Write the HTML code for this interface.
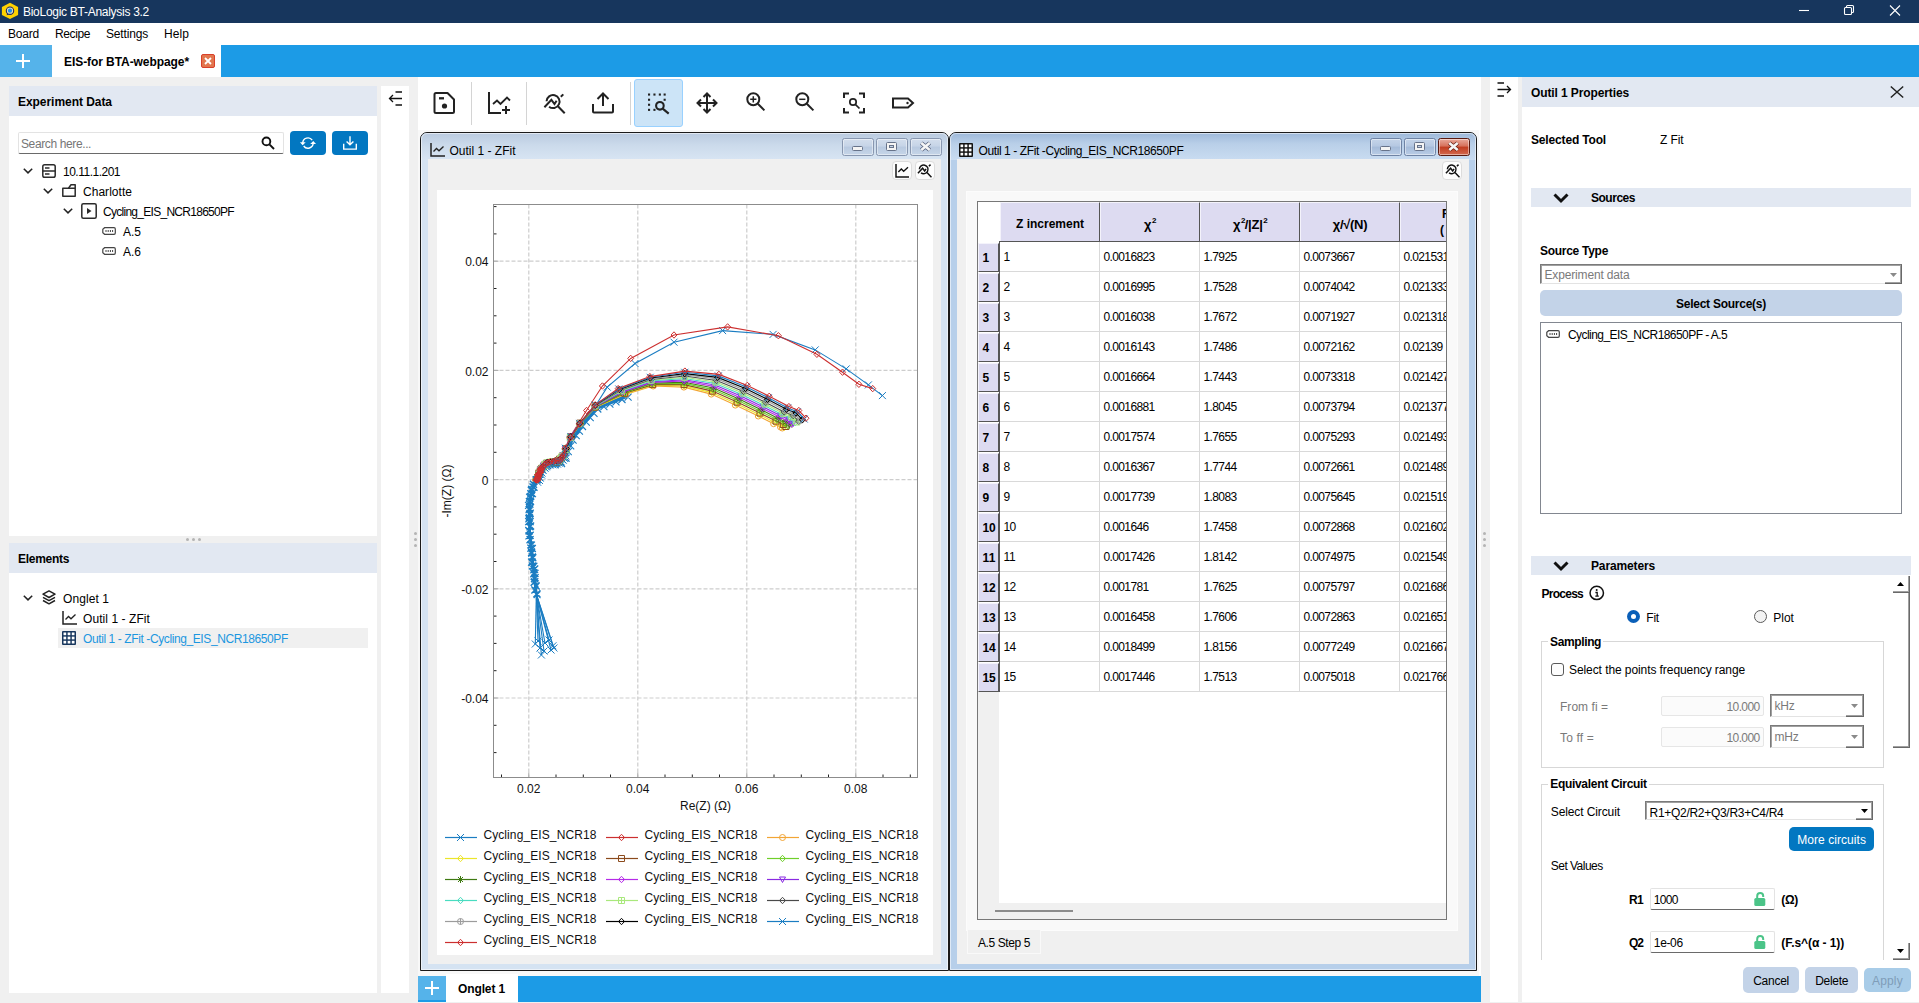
<!DOCTYPE html>
<html lang="en"><head><meta charset="utf-8"><title>BioLogic BT-Analysis 3.2</title>
<style>
*{box-sizing:border-box;margin:0;padding:0}
html,body{width:1919px;height:1003px;overflow:hidden;background:#f0f0f0}
body{position:relative;font-family:"Liberation Sans",sans-serif;font-size:12px;color:#000}
.abs{position:absolute}
.b{font-weight:bold}
svg{display:block;overflow:visible}
.t{position:absolute;white-space:nowrap;line-height:16px;height:16px}
/* top */
#titlebar{left:0;top:0;width:1919px;height:23px;background:#17365d}
#menubar{left:0;top:23px;width:1919px;height:22px;background:#fff}
#tabbar{left:0;top:45px;width:1919px;height:32px;background:#1c9be6}
#plus{left:0;top:0;width:52px;height:32px;background:#55b3ea}
#tab{left:52px;top:0;width:169px;height:32px;background:#fff}
/* panels */
.hdr{background:#e2e8f2}
.white{background:#fff}

</style></head>
<body>
<div id="titlebar" class="abs">
<svg class="abs" style="left:0;top:0" width="20" height="22" viewBox="0 0 20 22"><polygon points="10,2.8 18.1,6.9 18.1,14.9 10,19 1.9,14.9 1.9,6.9" fill="#ffd200"/><path d="M6.6 15.2L7.6 12.4L9.4 14.2Z" fill="#1d2a6a"/><circle cx="10" cy="10.7" r="3.7" fill="#e6dcb4" stroke="#1d2a6a" stroke-width="1.1"/><circle cx="10" cy="10.7" r="2.1" fill="#1f8fea"/></svg>
<div class="t" style="left:23px;top:4px;color:#fff;letter-spacing:-0.28px;">BioLogic BT-Analysis 3.2</div>
<svg class="abs" style="left:1798px;top:5px" width="110" height="12" viewBox="0 0 110 12" fill="none" stroke="#fff" stroke-width="1.1"><path d="M1 5.5H11"/><rect x="46.5" y="2.5" width="7" height="7" rx="1"/><path d="M48.5 2.5V1.5a1 1 0 0 1 1-1h5a1 1 0 0 1 1 1v5a1 1 0 0 1-1 1h-1"/><path d="M92 0.5l10 10M102 0.5l-10 10"/></svg>
</div>
<div id="menubar" class="abs"><div class="t" style="left:8px;top:3px;letter-spacing:-0.20px;">Board</div><div class="t" style="left:55px;top:3px;letter-spacing:-0.39px;">Recipe</div><div class="t" style="left:106px;top:3px;letter-spacing:-0.17px;">Settings</div><div class="t" style="left:164px;top:3px;letter-spacing:0.08px;">Help</div></div>
<div id="tabbar" class="abs">
<div id="plus" class="abs"><svg class="abs" style="left:16px;top:9px" width="14" height="14" viewBox="0 0 14 14" stroke="#fff" stroke-width="2"><path d="M7 0V14M0 7H14"/></svg></div>
<div id="tab" class="abs"><div class="t b" style="left:12px;top:9px;letter-spacing:-0.07px;">EIS-for BTA-webpage*</div>
<div class="abs" style="left:149px;top:9px;width:14px;height:14px;background:#e2764e;border:1px solid #d9402a;border-radius:2px"><svg class="abs" style="left:2px;top:2px" width="8" height="8" viewBox="0 0 8 8" stroke="#fff" stroke-width="1.8"><path d="M1 1L7 7M7 1L1 7"/></svg></div></div>
</div>
<div class="abs hdr" style="left:9px;top:86px;width:368px;height:30px"><div class="t b" style="left:9px;top:8px;letter-spacing:-0.05px;">Experiment Data</div></div>
<div class="abs white" style="left:9px;top:116px;width:368px;height:420px"></div>
<div class="abs" style="left:18px;top:132px;width:266px;height:22px;background:#fff;border:1px solid #e3e3e3;border-bottom:1px solid #6a6a6a;border-radius:2px"><div class="t" style="left:2px;top:2.5px;color:#767676;letter-spacing:-0.38px;">Search here...</div><svg class="abs" style="left:242px;top:3px" width="14" height="14" viewBox="0 0 14 14" fill="none" stroke="#111" stroke-width="1.9"><circle cx="5.4" cy="5.4" r="3.9"/><path d="M8.4 8.4L13 13" stroke-linecap="butt"/></svg></div>
<div class="abs" style="left:290px;top:131px;width:36px;height:24px;background:#0277c1;border-radius:4px"><svg class="abs" style="left:0;top:0" width="36" height="24" viewBox="0 0 36 24" fill="none" stroke="#fff" stroke-width="1.4"><path d="M12.77 12A5.2 5.2 0 0 1 22.2 9.1"/><path d="M23.17 12.1A5.2 5.2 0 0 1 13.7 15"/><path d="M9.9 11.2H15.7L12.7 14.3Z" fill="#fff" stroke="none"/><path d="M20.2 12.9H26L23.3 9.9Z" fill="#fff" stroke="none"/></svg></div>
<div class="abs" style="left:332px;top:131px;width:36px;height:24px;background:#0277c1;border-radius:4px"><svg class="abs" style="left:11px;top:5px" width="14" height="14" viewBox="0 0 14 14" fill="none" stroke="#fff" stroke-width="1.4"><path d="M7 0.3V8.5M3.6 5.4L7 8.8L10.4 5.4"/><path d="M0.7 7.8V13.1H13.3V7.8"/></svg></div>
<svg class="abs" style="left:22.7px;top:168px" width="10" height="6" viewBox="0 0 10 6" fill="none" stroke="#222" stroke-width="1.5"><path d="M0.8 0.8L5 4.9L9.2 0.8"/></svg><svg class="abs" style="left:42px;top:164px" width="14" height="14" viewBox="0 0 14 14" fill="none" stroke="#2b2b2b" stroke-width="1.5"><rect x="0.8" y="0.8" width="12.4" height="12.4" rx="1.8"/><path d="M0.8 7H13.2M3 4H7.5M3 10H7.5" /></svg><div class="t" style="left:63px;top:163.7px;letter-spacing:-0.50px;">10.11.1.201</div>
<svg class="abs" style="left:42.7px;top:188px" width="10" height="6" viewBox="0 0 10 6" fill="none" stroke="#222" stroke-width="1.5"><path d="M0.8 0.8L5 4.9L9.2 0.8"/></svg><svg class="abs" style="left:62px;top:184px" width="14" height="13" viewBox="0 0 14 13" fill="none" stroke="#2b2b2b" stroke-width="1.5" stroke-linejoin="round"><path d="M0.8 4.3H13.2V12.2H0.8Z"/><path d="M6.5 4.3L9 0.8H13.2V4.3"/></svg><div class="t" style="left:83px;top:183.7px;letter-spacing:0.03px;">Charlotte</div>
<svg class="abs" style="left:62.7px;top:208px" width="10" height="6" viewBox="0 0 10 6" fill="none" stroke="#222" stroke-width="1.5"><path d="M0.8 0.8L5 4.9L9.2 0.8"/></svg><svg class="abs" style="left:81px;top:203px" width="16" height="16" viewBox="0 0 16 16" fill="none" stroke="#2b2b2b" stroke-width="1.5"><rect x="0.8" y="0.8" width="14.4" height="14.4" rx="1.5"/><path d="M6 5L10.5 8L6 11Z" fill="#2b2b2b" stroke="none"/></svg><div class="t" style="left:103px;top:203.7px;letter-spacing:-0.72px;">Cycling_EIS_NCR18650PF</div>
<svg class="abs" style="left:102px;top:227px" width="14" height="8" viewBox="0 0 14 8" fill="none" stroke="#444" stroke-width="1.2"><path d="M2.6 0.7H12A1.3 1.3 0 0 1 13.3 2V6A1.3 1.3 0 0 1 12 7.3H2.6L0.8 5.8V2.2Z"/><path d="M4 3V5M6.2 3V5M8.4 3V5M10.6 3V5" stroke-width="1"/></svg><div class="t" style="left:123px;top:223.7px;letter-spacing:0.00px;">A.5</div>
<svg class="abs" style="left:102px;top:247px" width="14" height="8" viewBox="0 0 14 8" fill="none" stroke="#444" stroke-width="1.2"><path d="M2.6 0.7H12A1.3 1.3 0 0 1 13.3 2V6A1.3 1.3 0 0 1 12 7.3H2.6L0.8 5.8V2.2Z"/><path d="M4 3V5M6.2 3V5M8.4 3V5M10.6 3V5" stroke-width="1"/></svg><div class="t" style="left:123px;top:243.7px;letter-spacing:0.00px;">A.6</div>
<div class="abs" style="left:186px;top:538px;width:15px;height:3px"><i class="abs" style="left:0;top:0;width:3px;height:3px;background:#b4b4b4;border-radius:1.5px"></i><i class="abs" style="left:6px;top:0;width:3px;height:3px;background:#b4b4b4;border-radius:1.5px"></i><i class="abs" style="left:12px;top:0;width:3px;height:3px;background:#b4b4b4;border-radius:1.5px"></i></div>
<div class="abs hdr" style="left:9px;top:543px;width:368px;height:30px"><div class="t b" style="left:9px;top:8px;letter-spacing:-0.29px;">Elements</div></div>
<div class="abs white" style="left:9px;top:573px;width:368px;height:420px"></div>
<div class="abs" style="left:58px;top:628px;width:310px;height:20px;background:#f0f0f0"></div>
<svg class="abs" style="left:22.7px;top:595px" width="10" height="6" viewBox="0 0 10 6" fill="none" stroke="#222" stroke-width="1.5"><path d="M0.8 0.8L5 4.9L9.2 0.8"/></svg><svg class="abs" style="left:42px;top:590px" width="14" height="15" viewBox="0 0 14 15" fill="none" stroke="#222" stroke-width="1.5" stroke-linejoin="round"><path d="M7 0.9L13 4.2L7 7.5L1 4.2Z"/><path d="M1 7.3L7 10.6L13 7.3"/><path d="M1 10.5L7 13.8L13 10.5"/></svg><div class="t" style="left:63px;top:590.7px;letter-spacing:0.08px;">Onglet 1</div>
<svg class="abs" style="left:62px;top:611px" width="15" height="14" viewBox="0 0 15 14" fill="none" stroke="#222" stroke-width="1.5"><path d="M1 0V13H15"/><path d="M3.5 8.5L6.5 5.5L9 7.8L13.5 3.5" stroke-width="1.3"/></svg><div class="t" style="left:83px;top:610.7px;letter-spacing:0.07px;">Outil 1 - ZFit</div>
<svg class="abs" style="left:62px;top:631px" width="14" height="14" viewBox="0 0 14 14"><rect x="0" y="0" width="14" height="14" rx="1" fill="#17365d"/><g fill="#fff"><rect x="1.5" y="1.5" width="2.7" height="2.7"/><rect x="5.65" y="1.5" width="2.7" height="2.7"/><rect x="9.8" y="1.5" width="2.7" height="2.7"/><rect x="1.5" y="5.65" width="2.7" height="2.7"/><rect x="5.65" y="5.65" width="2.7" height="2.7"/><rect x="9.8" y="5.65" width="2.7" height="2.7"/><rect x="1.5" y="9.8" width="2.7" height="2.7"/><rect x="5.65" y="9.8" width="2.7" height="2.7"/><rect x="9.8" y="9.8" width="2.7" height="2.7"/></g></svg><div class="t" style="left:83px;top:630.7px;color:#1c97e0;letter-spacing:-0.40px;">Outil 1 - ZFit -Cycling_EIS_NCR18650PF</div>
<div class="abs white" style="left:381px;top:86px;width:28px;height:907px"><svg class="abs" style="left:7px;top:5px" width="15" height="15" viewBox="0 0 15 15" fill="none" stroke="#111" stroke-width="1.3"><path d="M7.5 1H14M7.5 14H14M1.5 7.5H14M5 4L1.5 7.5L5 11"/></svg></div>
<div class="abs" style="left:414px;top:532px;width:2px;height:14px"><i class="abs" style="left:0;top:0;width:3px;height:3px;background:#b4b4b4;border-radius:1.5px"></i><i class="abs" style="left:0;top:6px;width:3px;height:3px;background:#b4b4b4;border-radius:1.5px"></i><i class="abs" style="left:0;top:12px;width:3px;height:3px;background:#b4b4b4;border-radius:1.5px"></i></div>
<div class="abs white" style="left:418px;top:77px;width:1063px;height:899px"></div>
<div class="abs" style="left:418px;top:130px;width:1061px;height:846px;background:#f8f8f8"></div>
<div class="abs" style="left:471px;top:82px;width:1px;height:43px;background:#d4d4d4"></div>
<div class="abs" style="left:526px;top:82px;width:1px;height:43px;background:#d4d4d4"></div>
<div class="abs" style="left:630px;top:82px;width:1px;height:43px;background:#d4d4d4"></div>
<div class="abs" style="left:634px;top:79px;width:49px;height:48px;background:#cce4f7;border:1px solid #99d1ff;border-radius:3px"></div>
<svg class="abs" style="left:432.7px;top:91px" width="24" height="24" viewBox="0 0 24 24" fill="none" stroke="#222" stroke-width="2"><path d="M3 2H14.5L21 8.5V20.5A1.5 1.5 0 0 1 19.5 22H3A1.5 1.5 0 0 1 1.5 20.5V3.5A1.5 1.5 0 0 1 3 2Z" stroke-linejoin="round"/><path d="M6 7.3H11" stroke-width="2.3"/><circle cx="11.5" cy="15" r="2.6" fill="#222" stroke="none"/></svg>
<svg class="abs" style="left:487px;top:91px" width="24" height="24" viewBox="0 0 24 24" fill="none" stroke="#222" stroke-width="2"><path d="M2 1V22H14"/><path d="M6 13L10 9.5L13.5 13L20 6.5L23 9.5" stroke-width="1.8"/><path d="M19 15V23M15 19H23"/></svg>
<svg class="abs" style="left:543px;top:92px" width="24" height="24" viewBox="0 0 24 24" fill="none" stroke="#222" stroke-width="2"><path d="M3.55 9.3A6.5 6.5 0 1 1 6.05 14.7"/><path d="M14.9 14.3L21.7 21.3"/><path d="M1.4 15.2L8.4 7.8L11.5 12L13.6 8.7"/><path d="M17.8 4.8L20.3 2.4"/></svg>
<svg class="abs" style="left:591px;top:91px" width="24" height="24" viewBox="0 0 24 24" fill="none" stroke="#222" stroke-width="2"><path d="M12 15V2.5M6.5 8L12 2.5L17.5 8"/><path d="M2 13V20.5A1 1 0 0 0 3 21.5H21A1 1 0 0 0 22 20.5V13"/></svg>
<svg class="abs" style="left:647px;top:92px" width="24" height="24" viewBox="0 0 24 24" fill="none" stroke="#222" stroke-width="2"><rect x="1.0" y="1.5" width="2.1" height="2.1" fill="#222" stroke="none"/><rect x="6.4" y="1.5" width="2.1" height="2.1" fill="#222" stroke="none"/><rect x="11.8" y="1.5" width="2.1" height="2.1" fill="#222" stroke="none"/><rect x="16.6" y="1.5" width="2.1" height="2.1" fill="#222" stroke="none"/><rect x="1.0" y="6.7" width="2.1" height="2.1" fill="#222" stroke="none"/><rect x="1.0" y="11.7" width="2.1" height="2.1" fill="#222" stroke="none"/><rect x="1.0" y="16.8" width="2.1" height="2.1" fill="#222" stroke="none"/><rect x="16.6" y="6.7" width="2.1" height="2.1" fill="#222" stroke="none"/><rect x="6.4" y="16.8" width="2.1" height="2.1" fill="#222" stroke="none"/><circle cx="12.9" cy="13.8" r="3.8" stroke-width="2.1"/><path d="M15.7 16.6L21.7 21.6" stroke-width="2.1"/></svg>
<svg class="abs" style="left:695px;top:91px" width="24" height="24" viewBox="0 0 24 24" fill="none" stroke="#222" stroke-width="2"><path d="M12 2.5V21.5M2.5 12H21.5"/><path d="M8.5 6L12 2.5L15.5 6M8.5 18L12 21.5L15.5 18M6 8.5L2.5 12L6 15.5M18 8.5L21.5 12L18 15.5"/></svg>
<svg class="abs" style="left:743.6px;top:90.2px" width="24" height="24" viewBox="0 0 24 24" fill="none" stroke="#222" stroke-width="2"><circle cx="9.3" cy="9.3" r="6"/><path d="M13.8 13.8L20.4 20.4"/><path d="M9.3 6.2V12.4M6.2 9.3H12.4" stroke-width="1.5"/></svg>
<svg class="abs" style="left:792.6px;top:90.2px" width="24" height="24" viewBox="0 0 24 24" fill="none" stroke="#222" stroke-width="2"><circle cx="9.3" cy="9.3" r="6"/><path d="M13.8 13.8L20.4 20.4"/><path d="M6.2 9.3H12.4" stroke-width="1.5"/></svg>
<svg class="abs" style="left:842px;top:91px" width="24" height="24" viewBox="0 0 24 24" fill="none" stroke="#222" stroke-width="2"><path d="M2 7V2.5H7M17 2.5H22V7M22 17V21.5H17M7 21.5H2V17"/><circle cx="11" cy="11" r="3.2" stroke-width="1.7"/><path d="M13.3 13.3L17.5 17.5" stroke-width="1.7"/></svg>
<svg class="abs" style="left:891px;top:91px" width="24" height="24" viewBox="0 0 24 24" fill="none" stroke="#222" stroke-width="2"><path d="M2 7.5H17L22 12L17 16.5H2Z" stroke-linejoin="miter"/><circle cx="16.5" cy="12" r="1.2" fill="#222" stroke="none"/></svg>
<div class="abs" style="left:420px;top:132px;width:529px;height:839px;border:1px solid #1a1a1a;border-radius:7px 7px 0 0;background:#d5e3f2;overflow:hidden"><div class="abs" style="left:0;top:0;width:100%;height:27px;background:linear-gradient(#b9cadf,#cbdaeb 45%,#d8e5f3)"></div><div class="abs" style="left:0;top:0;width:100%;height:100%;border:1px solid rgba(255,255,255,.55);border-radius:6px 6px 0 0"></div><div class="abs" style="left:7px;top:26px;width:513px;height:805px;background:#f0f0f0"></div></div>
<div class="abs" style="left:949px;top:132px;width:528px;height:839px;border:1px solid #1a1a1a;border-radius:7px 7px 0 0;background:#b7cfea;overflow:hidden"><div class="abs" style="left:0;top:0;width:100%;height:27px;background:linear-gradient(#9db8d9,#b9cfe8 40%,#c9dcf1)"></div><div class="abs" style="left:0;top:0;width:100%;height:100%;border:1px solid rgba(255,255,255,.55);border-radius:6px 6px 0 0"></div><div class="abs" style="left:7px;top:26px;width:512px;height:805px;background:#f0f0f0"></div></div>
<svg class="abs" style="left:430px;top:143px" width="15" height="14" viewBox="0 0 15 14" fill="none" stroke="#222" stroke-width="1.5"><path d="M1 0V13H15"/><path d="M3.5 8.5L6.5 5.5L9 7.8L13.5 3.5" stroke-width="1.3"/></svg>
<div class="t" style="left:449.5px;top:142.5px;letter-spacing:0.00px;">Outil 1 - ZFit</div>
<div class="abs" style="left:842px;top:138px;width:32px;height:18px;border:1px solid #8897b0;border-radius:2.5px;background:linear-gradient(#d3deed,#c6d4e7 45%,#b8c9e0 50%,#c6d5e8);box-shadow:inset 0 0 0 1px rgba(255,255,255,.45)"><div class="abs" style="left:9px;top:7px;width:11px;height:5px;background:#f4f4f4;border:1px solid #67738a;border-radius:1.5px"></div></div><div class="abs" style="left:876px;top:138px;width:32px;height:18px;border:1px solid #8897b0;border-radius:2.5px;background:linear-gradient(#d3deed,#c6d4e7 45%,#b8c9e0 50%,#c6d5e8);box-shadow:inset 0 0 0 1px rgba(255,255,255,.45)"><div class="abs" style="left:9px;top:3px;width:11px;height:9px;background:#f4f4f4;border:1px solid #67738a;border-radius:1.5px"><div class="abs" style="left:2px;top:2px;width:5px;height:3px;border:1px solid #67738a;background:#c6d4e7"></div></div></div><div class="abs" style="left:910px;top:138px;width:32px;height:18px;border:1px solid #8897b0;border-radius:2.5px;background:linear-gradient(#d3deed,#c6d4e7 45%,#b8c9e0 50%,#c6d5e8);box-shadow:inset 0 0 0 1px rgba(255,255,255,.45)"><svg class="abs" style="left:8px;top:2px" width="13" height="11" viewBox="0 0 13 11"><path d="M2.3 2L10.7 9M10.7 2L2.3 9" stroke="#56627c" stroke-width="4.2"/><path d="M2.3 2L10.7 9M10.7 2L2.3 9" stroke="#f6f6f6" stroke-width="2.6"/></svg></div>
<svg class="abs" style="left:959px;top:143px" width="14" height="14" viewBox="0 0 14 14"><rect x="0" y="0" width="14" height="14" rx="1" fill="#111"/><g fill="#fff"><rect x="1.5" y="1.5" width="2.7" height="2.7"/><rect x="5.65" y="1.5" width="2.7" height="2.7"/><rect x="9.8" y="1.5" width="2.7" height="2.7"/><rect x="1.5" y="5.65" width="2.7" height="2.7"/><rect x="5.65" y="5.65" width="2.7" height="2.7"/><rect x="9.8" y="5.65" width="2.7" height="2.7"/><rect x="1.5" y="9.8" width="2.7" height="2.7"/><rect x="5.65" y="9.8" width="2.7" height="2.7"/><rect x="9.8" y="9.8" width="2.7" height="2.7"/></g></svg>
<div class="t" style="left:978.5px;top:142.5px;letter-spacing:-0.40px;">Outil 1 - ZFit -Cycling_EIS_NCR18650PF</div>
<div class="abs" style="left:1370px;top:138px;width:32px;height:18px;border:1px solid #6f83a4;border-radius:2.5px;background:linear-gradient(#c5d4e9,#b5c8e2 45%,#a5bbd9 50%,#b9cce5);box-shadow:inset 0 0 0 1px rgba(255,255,255,.45)"><div class="abs" style="left:9px;top:7px;width:11px;height:5px;background:#f4f4f4;border:1px solid #67738a;border-radius:1.5px"></div></div><div class="abs" style="left:1404px;top:138px;width:32px;height:18px;border:1px solid #6f83a4;border-radius:2.5px;background:linear-gradient(#c5d4e9,#b5c8e2 45%,#a5bbd9 50%,#b9cce5);box-shadow:inset 0 0 0 1px rgba(255,255,255,.45)"><div class="abs" style="left:9px;top:3px;width:11px;height:9px;background:#f4f4f4;border:1px solid #67738a;border-radius:1.5px"><div class="abs" style="left:2px;top:2px;width:5px;height:3px;border:1px solid #67738a;background:#c6d4e7"></div></div></div><div class="abs" style="left:1438px;top:138px;width:32px;height:18px;border:1px solid #5a1a10;border-radius:2.5px;background:linear-gradient(#e9a99b,#d6705a 45%,#c23c20 50%,#d2694f);box-shadow:inset 0 0 0 1px rgba(255,255,255,.45)"><svg class="abs" style="left:8px;top:2px" width="13" height="11" viewBox="0 0 13 11"><path d="M2.3 2L10.7 9M10.7 2L2.3 9" stroke="#6a2418" stroke-width="4.2"/><path d="M2.3 2L10.7 9M10.7 2L2.3 9" stroke="#f6f6f6" stroke-width="2.6"/></svg></div>
<div class="abs" style="left:891.5px;top:161px;width:20px;height:19px;background:#fdfdfd;border:1px solid #dcdcdc;border-radius:4px"><svg class="abs" style="left:1.5px;top:1px" width="16" height="16" viewBox="0 0 24 24" fill="none" stroke="#111" stroke-width="2.2"><path d="M3 1.5V21H22.5"/><path d="M6.5 13.5L11 9L14.5 12.5L21 6.5" stroke-width="2"/></svg></div>
<div class="abs" style="left:914.5px;top:161px;width:20px;height:19px;background:#fdfdfd;border:1px solid #dcdcdc;border-radius:4px"><svg class="abs" style="left:1.5px;top:1px" width="16" height="16" viewBox="0 0 24 24" fill="none" stroke="#111" stroke-width="2.2"><path d="M3.55 9.3A6.5 6.5 0 1 1 6.05 14.7"/><path d="M14.9 14.3L21.7 21.3"/><path d="M1.4 15.2L8.4 7.8L11.5 12L13.6 8.7"/><path d="M17.8 4.8L20.3 2.4"/></svg></div>
<div class="abs" style="left:1442px;top:161px;width:20px;height:19px;background:#fdfdfd;border:1px solid #dcdcdc;border-radius:4px"><svg class="abs" style="left:1.5px;top:1px" width="16" height="16" viewBox="0 0 24 24" fill="none" stroke="#111" stroke-width="2.2"><path d="M3.55 9.3A6.5 6.5 0 1 1 6.05 14.7"/><path d="M14.9 14.3L21.7 21.3"/><path d="M1.4 15.2L8.4 7.8L11.5 12L13.6 8.7"/><path d="M17.8 4.8L20.3 2.4"/></svg></div>
<div class="abs white" style="left:437px;top:190px;width:496px;height:765px"></div>
<svg class="abs" style="left:0;top:0" width="1919" height="1003" viewBox="0 0 1919 1003" font-family="Liberation Sans, sans-serif" font-size="12"><path d="M528.8 204.5V777.5M637.8 204.5V777.5M746.8 204.5V777.5M855.8 204.5V777.5M493.5 261.2H917.5M493.5 370.4H917.5M493.5 479.6H917.5M493.5 588.8H917.5M493.5 698.0H917.5" stroke="#cdcdcd" stroke-width="1.2" stroke-dasharray="4 2" fill="none"/><path d="M501.5 777.5v-3M556.0 777.5v-3M583.3 777.5v-3M610.5 777.5v-3M665.0 777.5v-3M692.3 777.5v-3M719.5 777.5v-3M774.0 777.5v-3M801.3 777.5v-3M828.5 777.5v-3M883.0 777.5v-3M910.3 777.5v-3M493.5 752.6h3M493.5 725.3h3M493.5 670.7h3M493.5 643.4h3M493.5 616.1h3M493.5 561.5h3M493.5 534.2h3M493.5 506.9h3M493.5 452.3h3M493.5 425.0h3M493.5 397.7h3M493.5 343.1h3M493.5 315.8h3M493.5 288.5h3M493.5 233.9h3M493.5 206.6h3" stroke="#222" stroke-width="1" fill="none"/><path d="M528.8 777.5v-5M637.8 777.5v-5M746.8 777.5v-5M855.8 777.5v-5M493.5 698.0h5M493.5 588.8h5M493.5 479.6h5M493.5 370.4h5M493.5 261.2h5" stroke="#aaa" stroke-width="1" fill="none"/><rect x="493.5" y="204.5" width="424.0" height="573.0" fill="none" stroke="#8c8c8c" stroke-width="1"/><text x="488.5" y="266.4" text-anchor="end" fill="#111">0.04</text><text x="488.5" y="375.6" text-anchor="end" fill="#111">0.02</text><text x="488.5" y="484.8" text-anchor="end" fill="#111">0</text><text x="488.5" y="594.0" text-anchor="end" fill="#111">-0.02</text><text x="488.5" y="703.2" text-anchor="end" fill="#111">-0.04</text><text x="528.8" y="793" text-anchor="middle" fill="#111">0.02</text><text x="637.8" y="793" text-anchor="middle" fill="#111">0.04</text><text x="746.8" y="793" text-anchor="middle" fill="#111">0.06</text><text x="855.8" y="793" text-anchor="middle" fill="#111">0.08</text><text x="705.5" y="810" text-anchor="middle" fill="#111">Re(Z) (Ω)</text><text transform="translate(451 491) rotate(-90)" text-anchor="middle" fill="#111">-Im(Z) (Ω)</text><path d="M554.1 463.8L560.6 462.7L565.1 457.2L567.3 450.6L572.1 439.2L581.5 425.5L596.8 408.0L627.1 396.1" fill="none" stroke="#1b7dc2" stroke-width="3.6" stroke-linejoin="round"/><path d="M551.6 461.3l7 7m0 -7l-7 7M558.1 460.2l7 7m0 -7l-7 7M562.6 454.7l7 7m0 -7l-7 7M564.8 448.1l7 7m0 -7l-7 7M567.2 442.4l7 7m0 -7l-7 7M569.6 436.7l7 7m0 -7l-7 7M572.7 432.1l7 7m0 -7l-7 7M575.9 427.6l7 7m0 -7l-7 7M579.0 423.0l7 7m0 -7l-7 7M582.8 418.6l7 7m0 -7l-7 7M586.7 414.2l7 7m0 -7l-7 7M590.5 409.9l7 7m0 -7l-7 7M594.3 405.5l7 7m0 -7l-7 7M600.4 403.1l7 7m0 -7l-7 7M606.4 400.7l7 7m0 -7l-7 7M612.5 398.4l7 7m0 -7l-7 7M618.5 396.0l7 7m0 -7l-7 7M624.6 393.6l7 7m0 -7l-7 7" fill="none" stroke="#1b7dc2" stroke-width="1.1"/><path d="M537.7 482.3L538.3 479.6L539.8 477.5L539.9 474.3L540.7 472.1L542.4 470.1L544.8 467.8L546.3 466.9L547.2 465.6L550.1 465.0L552.9 464.8L555.2 463.9L557.5 464.1L559.4 463.2L561.0 462.1L563.1 460.0L564.5 458.3L565.6 448.3L570.7 437.5L579.7 423.4L595.2 406.2L607.2 387.1L635.0 363.5L674.0 342.2L722.6 330.6L773.1 334.4L815.2 349.9L846.2 368.9L868.4 384.9L882.4 395.6" fill="none" stroke="#1b7dc2" stroke-width="1.1"/><path d="M534.2 478.8l7 7m0 -7l-7 7M534.8 476.1l7 7m0 -7l-7 7M536.3 474.0l7 7m0 -7l-7 7M536.4 470.8l7 7m0 -7l-7 7M537.2 468.6l7 7m0 -7l-7 7M538.9 466.6l7 7m0 -7l-7 7M541.3 464.3l7 7m0 -7l-7 7M542.8 463.4l7 7m0 -7l-7 7M543.7 462.1l7 7m0 -7l-7 7M546.6 461.5l7 7m0 -7l-7 7M549.4 461.3l7 7m0 -7l-7 7M551.7 460.4l7 7m0 -7l-7 7M554.0 460.6l7 7m0 -7l-7 7M555.9 459.7l7 7m0 -7l-7 7M557.5 458.6l7 7m0 -7l-7 7M559.6 456.5l7 7m0 -7l-7 7M561.0 454.8l7 7m0 -7l-7 7M562.1 444.8l7 7m0 -7l-7 7M567.2 434.0l7 7m0 -7l-7 7M576.2 419.9l7 7m0 -7l-7 7M591.7 402.7l7 7m0 -7l-7 7M603.7 383.6l7 7m0 -7l-7 7M631.5 360.0l7 7m0 -7l-7 7M670.5 338.7l7 7m0 -7l-7 7M719.1 327.1l7 7m0 -7l-7 7M769.6 330.9l7 7m0 -7l-7 7M811.7 346.4l7 7m0 -7l-7 7M842.7 365.4l7 7m0 -7l-7 7M864.9 381.4l7 7m0 -7l-7 7M878.9 392.1l7 7m0 -7l-7 7" fill="none" stroke="#1b7dc2" stroke-width="1"/><path d="M536.1 480.3L536.8 477.7L537.9 475.8L538.9 472.7L539.4 470.4L541.1 468.1L543.2 465.9L544.6 465.0L546.4 464.1L549.1 463.5L551.5 463.0L553.7 462.5L555.8 462.1L557.7 461.5L560.1 459.6L561.4 458.2L562.9 456.2L565.8 448.3L570.0 437.0L586.5 410.5L602.4 386.0L630.7 358.4L674.0 335.0L727.6 326.9L778.4 335.7L816.9 354.3L842.5 372.2L858.9 384.3L872.7 388.6" fill="none" stroke="#cc2f2f" stroke-width="1.1"/><path d="M533.1 480.3l3 -3.2l3 3.2l-3 3.2zM533.8 477.7l3 -3.2l3 3.2l-3 3.2zM534.9 475.8l3 -3.2l3 3.2l-3 3.2zM535.9 472.7l3 -3.2l3 3.2l-3 3.2zM536.4 470.4l3 -3.2l3 3.2l-3 3.2zM538.1 468.1l3 -3.2l3 3.2l-3 3.2zM540.2 465.9l3 -3.2l3 3.2l-3 3.2zM541.6 465.0l3 -3.2l3 3.2l-3 3.2zM543.4 464.1l3 -3.2l3 3.2l-3 3.2zM546.1 463.5l3 -3.2l3 3.2l-3 3.2zM548.5 463.0l3 -3.2l3 3.2l-3 3.2zM550.7 462.5l3 -3.2l3 3.2l-3 3.2zM552.8 462.1l3 -3.2l3 3.2l-3 3.2zM554.7 461.5l3 -3.2l3 3.2l-3 3.2zM557.1 459.6l3 -3.2l3 3.2l-3 3.2zM558.4 458.2l3 -3.2l3 3.2l-3 3.2zM559.9 456.2l3 -3.2l3 3.2l-3 3.2zM562.8 448.3l3 -3.2l3 3.2l-3 3.2zM567.0 437.0l3 -3.2l3 3.2l-3 3.2zM583.5 410.5l3 -3.2l3 3.2l-3 3.2zM599.4 386.0l3 -3.2l3 3.2l-3 3.2zM627.7 358.4l3 -3.2l3 3.2l-3 3.2zM671.0 335.0l3 -3.2l3 3.2l-3 3.2zM724.6 326.9l3 -3.2l3 3.2l-3 3.2zM775.4 335.7l3 -3.2l3 3.2l-3 3.2zM813.9 354.3l3 -3.2l3 3.2l-3 3.2zM839.5 372.2l3 -3.2l3 3.2l-3 3.2zM855.9 384.3l3 -3.2l3 3.2l-3 3.2zM869.7 388.6l3 -3.2l3 3.2l-3 3.2z" fill="none" stroke="#cc2f2f" stroke-width="1"/><path d="M535.9 479.8L536.8 477.8L537.7 475.7L539.1 472.8L540.0 470.1L542.0 468.6L543.5 466.2L545.1 465.2L546.4 464.1L549.2 463.1L551.8 462.4L553.6 462.6L556.4 462.5L558.6 461.7L559.4 459.8L561.7 458.2L562.8 456.1L565.3 448.3L569.9 437.9L580.1 423.2L595.2 407.5L625.9 394.1L653.2 386.0L683.9 387.1L711.2 394.1L735.3 405.1L758.3 416.0L773.6 423.7L780.5 427.0L782.3 428.0" fill="none" stroke="#f2a535" stroke-width="1.1"/><path d="M532.9 479.8a3 3 0 1 0 6 0a3 3 0 1 0 -6 0M533.8 477.8a3 3 0 1 0 6 0a3 3 0 1 0 -6 0M534.7 475.7a3 3 0 1 0 6 0a3 3 0 1 0 -6 0M536.1 472.8a3 3 0 1 0 6 0a3 3 0 1 0 -6 0M537.0 470.1a3 3 0 1 0 6 0a3 3 0 1 0 -6 0M539.0 468.6a3 3 0 1 0 6 0a3 3 0 1 0 -6 0M540.5 466.2a3 3 0 1 0 6 0a3 3 0 1 0 -6 0M542.1 465.2a3 3 0 1 0 6 0a3 3 0 1 0 -6 0M543.4 464.1a3 3 0 1 0 6 0a3 3 0 1 0 -6 0M546.2 463.1a3 3 0 1 0 6 0a3 3 0 1 0 -6 0M548.8 462.4a3 3 0 1 0 6 0a3 3 0 1 0 -6 0M550.6 462.6a3 3 0 1 0 6 0a3 3 0 1 0 -6 0M553.4 462.5a3 3 0 1 0 6 0a3 3 0 1 0 -6 0M555.6 461.7a3 3 0 1 0 6 0a3 3 0 1 0 -6 0M556.4 459.8a3 3 0 1 0 6 0a3 3 0 1 0 -6 0M558.7 458.2a3 3 0 1 0 6 0a3 3 0 1 0 -6 0M559.8 456.1a3 3 0 1 0 6 0a3 3 0 1 0 -6 0M562.3 448.3a3 3 0 1 0 6 0a3 3 0 1 0 -6 0M566.9 437.9a3 3 0 1 0 6 0a3 3 0 1 0 -6 0M577.1 423.2a3 3 0 1 0 6 0a3 3 0 1 0 -6 0M592.2 407.5a3 3 0 1 0 6 0a3 3 0 1 0 -6 0M622.9 394.1a3 3 0 1 0 6 0a3 3 0 1 0 -6 0M650.2 386.0a3 3 0 1 0 6 0a3 3 0 1 0 -6 0M680.9 387.1a3 3 0 1 0 6 0a3 3 0 1 0 -6 0M708.2 394.1a3 3 0 1 0 6 0a3 3 0 1 0 -6 0M732.3 405.1a3 3 0 1 0 6 0a3 3 0 1 0 -6 0M755.3 416.0a3 3 0 1 0 6 0a3 3 0 1 0 -6 0M770.6 423.7a3 3 0 1 0 6 0a3 3 0 1 0 -6 0M777.5 427.0a3 3 0 1 0 6 0a3 3 0 1 0 -6 0M779.3 428.0a3 3 0 1 0 6 0a3 3 0 1 0 -6 0" fill="none" stroke="#f2a535" stroke-width="1"/><path d="M536.3 479.6L537.0 477.9L538.3 475.1L538.8 472.8L540.4 470.1L541.2 467.7L543.0 466.6L544.9 465.2L546.1 463.4L549.3 463.5L551.7 462.2L554.4 462.0L556.5 461.5L558.6 461.8L560.1 459.5L561.6 457.5L562.7 455.9L566.2 448.3L571.0 437.8L580.6 423.5L595.2 407.3L625.3 393.7L652.9 385.3L684.0 385.9L711.8 392.6L736.2 403.6L759.1 414.5L774.8 422.4L781.9 425.7L784.1 427.2" fill="none" stroke="#ece52a" stroke-width="1.1"/><path d="M533.3 479.6l3 -3.2l3 3.2l-3 3.2zM534.0 477.9l3 -3.2l3 3.2l-3 3.2zM535.3 475.1l3 -3.2l3 3.2l-3 3.2zM535.8 472.8l3 -3.2l3 3.2l-3 3.2zM537.4 470.1l3 -3.2l3 3.2l-3 3.2zM538.2 467.7l3 -3.2l3 3.2l-3 3.2zM540.0 466.6l3 -3.2l3 3.2l-3 3.2zM541.9 465.2l3 -3.2l3 3.2l-3 3.2zM543.1 463.4l3 -3.2l3 3.2l-3 3.2zM546.3 463.5l3 -3.2l3 3.2l-3 3.2zM548.7 462.2l3 -3.2l3 3.2l-3 3.2zM551.4 462.0l3 -3.2l3 3.2l-3 3.2zM553.5 461.5l3 -3.2l3 3.2l-3 3.2zM555.6 461.8l3 -3.2l3 3.2l-3 3.2zM557.1 459.5l3 -3.2l3 3.2l-3 3.2zM558.6 457.5l3 -3.2l3 3.2l-3 3.2zM559.7 455.9l3 -3.2l3 3.2l-3 3.2zM563.2 448.3l3 -3.2l3 3.2l-3 3.2zM568.0 437.8l3 -3.2l3 3.2l-3 3.2zM577.6 423.5l3 -3.2l3 3.2l-3 3.2zM592.2 407.3l3 -3.2l3 3.2l-3 3.2zM622.3 393.7l3 -3.2l3 3.2l-3 3.2zM649.9 385.3l3 -3.2l3 3.2l-3 3.2zM681.0 385.9l3 -3.2l3 3.2l-3 3.2zM708.8 392.6l3 -3.2l3 3.2l-3 3.2zM733.2 403.6l3 -3.2l3 3.2l-3 3.2zM756.1 414.5l3 -3.2l3 3.2l-3 3.2zM771.8 422.4l3 -3.2l3 3.2l-3 3.2zM778.9 425.7l3 -3.2l3 3.2l-3 3.2zM781.1 427.2l3 -3.2l3 3.2l-3 3.2z" fill="none" stroke="#ece52a" stroke-width="1"/><path d="M536.2 479.7L537.7 478.0L538.5 475.0L538.9 472.9L540.4 469.7L541.5 468.4L543.9 465.8L544.8 464.7L546.6 463.1L549.6 463.0L552.3 462.2L554.7 462.4L556.2 462.2L558.7 461.7L559.6 459.1L561.8 457.5L563.0 455.5L566.4 448.8L571.0 436.8L579.9 423.1L595.2 407.1L624.7 393.3L652.7 384.6L684.1 384.6L712.4 391.1L737.1 402.1L760.0 413.0L776.0 421.1L783.3 424.5L785.9 426.5" fill="none" stroke="#8b4a1c" stroke-width="1.1"/><path d="M533.2 476.7h6v6h-6zM534.7 475.0h6v6h-6zM535.5 472.0h6v6h-6zM535.9 469.9h6v6h-6zM537.4 466.7h6v6h-6zM538.5 465.4h6v6h-6zM540.9 462.8h6v6h-6zM541.8 461.7h6v6h-6zM543.6 460.1h6v6h-6zM546.6 460.0h6v6h-6zM549.3 459.2h6v6h-6zM551.7 459.4h6v6h-6zM553.2 459.2h6v6h-6zM555.7 458.7h6v6h-6zM556.6 456.1h6v6h-6zM558.8 454.5h6v6h-6zM560.0 452.5h6v6h-6zM563.4 445.8h6v6h-6zM568.0 433.8h6v6h-6zM576.9 420.1h6v6h-6zM592.2 404.1h6v6h-6zM621.7 390.3h6v6h-6zM649.7 381.6h6v6h-6zM681.1 381.6h6v6h-6zM709.4 388.1h6v6h-6zM734.1 399.1h6v6h-6zM757.0 410.0h6v6h-6zM773.0 418.1h6v6h-6zM780.3 421.5h6v6h-6zM782.9 423.5h6v6h-6z" fill="none" stroke="#8b4a1c" stroke-width="1"/><path d="M537.0 479.8L537.1 477.0L538.4 474.5L538.9 472.4L540.1 470.0L542.0 467.8L543.8 465.5L544.9 464.9L546.3 463.1L549.1 462.8L551.6 461.9L554.3 461.7L556.7 461.9L558.7 461.5L560.0 459.0L561.6 457.5L563.2 455.4L565.3 449.2L570.2 437.3L580.5 423.4L595.2 406.9L624.1 392.8L652.4 383.8L684.1 383.4L713.0 389.6L738.1 400.6L760.8 411.5L777.1 419.8L784.7 423.2L787.8 425.7" fill="none" stroke="#6fcf2a" stroke-width="1.1"/><path d="M534.0 479.8l3 -3.2l3 3.2l-3 3.2zM534.1 477.0l3 -3.2l3 3.2l-3 3.2zM535.4 474.5l3 -3.2l3 3.2l-3 3.2zM535.9 472.4l3 -3.2l3 3.2l-3 3.2zM537.1 470.0l3 -3.2l3 3.2l-3 3.2zM539.0 467.8l3 -3.2l3 3.2l-3 3.2zM540.8 465.5l3 -3.2l3 3.2l-3 3.2zM541.9 464.9l3 -3.2l3 3.2l-3 3.2zM543.3 463.1l3 -3.2l3 3.2l-3 3.2zM546.1 462.8l3 -3.2l3 3.2l-3 3.2zM548.6 461.9l3 -3.2l3 3.2l-3 3.2zM551.3 461.7l3 -3.2l3 3.2l-3 3.2zM553.7 461.9l3 -3.2l3 3.2l-3 3.2zM555.7 461.5l3 -3.2l3 3.2l-3 3.2zM557.0 459.0l3 -3.2l3 3.2l-3 3.2zM558.6 457.5l3 -3.2l3 3.2l-3 3.2zM560.2 455.4l3 -3.2l3 3.2l-3 3.2zM562.3 449.2l3 -3.2l3 3.2l-3 3.2zM567.2 437.3l3 -3.2l3 3.2l-3 3.2zM577.5 423.4l3 -3.2l3 3.2l-3 3.2zM592.2 406.9l3 -3.2l3 3.2l-3 3.2zM621.1 392.8l3 -3.2l3 3.2l-3 3.2zM649.4 383.8l3 -3.2l3 3.2l-3 3.2zM681.1 383.4l3 -3.2l3 3.2l-3 3.2zM710.0 389.6l3 -3.2l3 3.2l-3 3.2zM735.1 400.6l3 -3.2l3 3.2l-3 3.2zM757.8 411.5l3 -3.2l3 3.2l-3 3.2zM774.1 419.8l3 -3.2l3 3.2l-3 3.2zM781.7 423.2l3 -3.2l3 3.2l-3 3.2zM784.8 425.7l3 -3.2l3 3.2l-3 3.2z" fill="none" stroke="#6fcf2a" stroke-width="1"/><path d="M536.4 479.9L537.7 477.4L538.1 474.7L538.9 472.1L540.5 469.4L541.8 468.3L544.2 465.7L545.5 464.6L546.7 463.6L549.2 463.1L551.8 462.6L554.6 461.8L556.8 461.5L559.0 460.8L560.3 459.7L562.2 457.2L563.0 456.0L565.5 448.2L570.8 437.3L580.2 423.7L595.2 406.7L623.5 392.4L652.2 383.1L684.2 382.2L713.6 388.0L739.0 399.0L761.7 409.9L778.3 418.4L786.1 421.9L789.6 425.0" fill="none" stroke="#3f7a12" stroke-width="1.1"/><path d="M532.9 479.9h7m-3.5 -3.5v7m-2.5 -6l5 5m0 -5l-5 5M534.2 477.4h7m-3.5 -3.5v7m-2.5 -6l5 5m0 -5l-5 5M534.6 474.7h7m-3.5 -3.5v7m-2.5 -6l5 5m0 -5l-5 5M535.4 472.1h7m-3.5 -3.5v7m-2.5 -6l5 5m0 -5l-5 5M537.0 469.4h7m-3.5 -3.5v7m-2.5 -6l5 5m0 -5l-5 5M538.3 468.3h7m-3.5 -3.5v7m-2.5 -6l5 5m0 -5l-5 5M540.7 465.7h7m-3.5 -3.5v7m-2.5 -6l5 5m0 -5l-5 5M542.0 464.6h7m-3.5 -3.5v7m-2.5 -6l5 5m0 -5l-5 5M543.2 463.6h7m-3.5 -3.5v7m-2.5 -6l5 5m0 -5l-5 5M545.7 463.1h7m-3.5 -3.5v7m-2.5 -6l5 5m0 -5l-5 5M548.3 462.6h7m-3.5 -3.5v7m-2.5 -6l5 5m0 -5l-5 5M551.1 461.8h7m-3.5 -3.5v7m-2.5 -6l5 5m0 -5l-5 5M553.3 461.5h7m-3.5 -3.5v7m-2.5 -6l5 5m0 -5l-5 5M555.5 460.8h7m-3.5 -3.5v7m-2.5 -6l5 5m0 -5l-5 5M556.8 459.7h7m-3.5 -3.5v7m-2.5 -6l5 5m0 -5l-5 5M558.7 457.2h7m-3.5 -3.5v7m-2.5 -6l5 5m0 -5l-5 5M559.5 456.0h7m-3.5 -3.5v7m-2.5 -6l5 5m0 -5l-5 5M562.0 448.2h7m-3.5 -3.5v7m-2.5 -6l5 5m0 -5l-5 5M567.3 437.3h7m-3.5 -3.5v7m-2.5 -6l5 5m0 -5l-5 5M576.7 423.7h7m-3.5 -3.5v7m-2.5 -6l5 5m0 -5l-5 5M591.7 406.7h7m-3.5 -3.5v7m-2.5 -6l5 5m0 -5l-5 5M620.0 392.4h7m-3.5 -3.5v7m-2.5 -6l5 5m0 -5l-5 5M648.7 383.1h7m-3.5 -3.5v7m-2.5 -6l5 5m0 -5l-5 5M680.7 382.2h7m-3.5 -3.5v7m-2.5 -6l5 5m0 -5l-5 5M710.1 388.0h7m-3.5 -3.5v7m-2.5 -6l5 5m0 -5l-5 5M735.5 399.0h7m-3.5 -3.5v7m-2.5 -6l5 5m0 -5l-5 5M758.2 409.9h7m-3.5 -3.5v7m-2.5 -6l5 5m0 -5l-5 5M774.8 418.4h7m-3.5 -3.5v7m-2.5 -6l5 5m0 -5l-5 5M782.6 421.9h7m-3.5 -3.5v7m-2.5 -6l5 5m0 -5l-5 5M786.1 425.0h7m-3.5 -3.5v7m-2.5 -6l5 5m0 -5l-5 5" fill="none" stroke="#3f7a12" stroke-width="1"/><path d="M536.9 479.5L537.5 477.5L538.8 475.0L539.9 471.9L540.8 470.1L542.1 467.7L543.5 465.9L545.1 464.4L546.5 462.7L549.7 462.6L552.6 462.4L555.0 461.3L556.8 461.5L559.0 461.1L560.4 459.6L561.8 457.4L563.6 455.1L565.6 448.2L570.0 436.7L579.5 423.3L595.2 406.5L622.9 392.0L651.9 382.4L684.3 380.9L714.2 386.5L739.9 397.5L762.5 408.4L779.5 417.1L787.5 420.7L791.4 424.2" fill="none" stroke="#b52be8" stroke-width="1.1"/><path d="M533.9 479.5l3 -3.2l3 3.2l-3 3.2zM534.5 477.5l3 -3.2l3 3.2l-3 3.2zM535.8 475.0l3 -3.2l3 3.2l-3 3.2zM536.9 471.9l3 -3.2l3 3.2l-3 3.2zM537.8 470.1l3 -3.2l3 3.2l-3 3.2zM539.1 467.7l3 -3.2l3 3.2l-3 3.2zM540.5 465.9l3 -3.2l3 3.2l-3 3.2zM542.1 464.4l3 -3.2l3 3.2l-3 3.2zM543.5 462.7l3 -3.2l3 3.2l-3 3.2zM546.7 462.6l3 -3.2l3 3.2l-3 3.2zM549.6 462.4l3 -3.2l3 3.2l-3 3.2zM552.0 461.3l3 -3.2l3 3.2l-3 3.2zM553.8 461.5l3 -3.2l3 3.2l-3 3.2zM556.0 461.1l3 -3.2l3 3.2l-3 3.2zM557.4 459.6l3 -3.2l3 3.2l-3 3.2zM558.8 457.4l3 -3.2l3 3.2l-3 3.2zM560.6 455.1l3 -3.2l3 3.2l-3 3.2zM562.6 448.2l3 -3.2l3 3.2l-3 3.2zM567.0 436.7l3 -3.2l3 3.2l-3 3.2zM576.5 423.3l3 -3.2l3 3.2l-3 3.2zM592.2 406.5l3 -3.2l3 3.2l-3 3.2zM619.9 392.0l3 -3.2l3 3.2l-3 3.2zM648.9 382.4l3 -3.2l3 3.2l-3 3.2zM681.3 380.9l3 -3.2l3 3.2l-3 3.2zM711.2 386.5l3 -3.2l3 3.2l-3 3.2zM736.9 397.5l3 -3.2l3 3.2l-3 3.2zM759.5 408.4l3 -3.2l3 3.2l-3 3.2zM776.5 417.1l3 -3.2l3 3.2l-3 3.2zM784.5 420.7l3 -3.2l3 3.2l-3 3.2zM788.4 424.2l3 -3.2l3 3.2l-3 3.2z" fill="none" stroke="#b52be8" stroke-width="1"/><path d="M537.0 479.6L538.2 477.0L539.1 474.4L539.9 472.1L540.6 469.4L542.7 467.8L543.6 465.5L546.0 463.8L546.8 463.2L549.3 462.7L552.6 462.2L554.7 462.1L556.7 461.3L558.6 461.0L560.4 459.5L562.4 456.9L563.0 455.0L565.3 449.1L570.6 437.4L579.9 423.0L595.2 406.3L622.3 391.6L651.7 381.7L684.4 379.7L714.8 385.0L740.8 396.0L763.3 406.9L780.7 415.8L788.9 419.4L793.2 423.5" fill="none" stroke="#8a2be2" stroke-width="1.1"/><path d="M534.0 477.1h6l-3 5.5zM535.2 474.5h6l-3 5.5zM536.1 471.9h6l-3 5.5zM536.9 469.6h6l-3 5.5zM537.6 466.9h6l-3 5.5zM539.7 465.3h6l-3 5.5zM540.6 463.0h6l-3 5.5zM543.0 461.3h6l-3 5.5zM543.8 460.7h6l-3 5.5zM546.3 460.2h6l-3 5.5zM549.6 459.7h6l-3 5.5zM551.7 459.6h6l-3 5.5zM553.7 458.8h6l-3 5.5zM555.6 458.5h6l-3 5.5zM557.4 457.0h6l-3 5.5zM559.4 454.4h6l-3 5.5zM560.0 452.5h6l-3 5.5zM562.3 446.6h6l-3 5.5zM567.6 434.9h6l-3 5.5zM576.9 420.5h6l-3 5.5zM592.2 403.8h6l-3 5.5zM619.3 389.1h6l-3 5.5zM648.7 379.2h6l-3 5.5zM681.4 377.2h6l-3 5.5zM711.8 382.5h6l-3 5.5zM737.8 393.5h6l-3 5.5zM760.3 404.4h6l-3 5.5zM777.7 413.3h6l-3 5.5zM785.9 416.9h6l-3 5.5zM790.2 421.0h6l-3 5.5z" fill="none" stroke="#8a2be2" stroke-width="1"/><path d="M537.0 479.9L538.3 477.0L538.6 474.9L539.7 472.1L540.3 469.3L542.2 467.3L543.6 465.5L545.3 464.2L547.2 463.1L549.7 462.2L552.9 461.8L554.4 461.9L556.5 461.5L558.9 460.7L561.1 458.9L562.3 457.0L564.0 455.5L565.7 448.2L570.3 437.4L579.6 423.7L595.2 406.0L621.8 391.1L651.4 380.9L684.4 378.5L715.3 383.5L741.8 394.5L764.2 405.4L781.8 414.5L790.4 418.1L795.1 422.7" fill="none" stroke="#49dcc0" stroke-width="1.1"/><path d="M534.0 479.9l3 -3.2l3 3.2l-3 3.2zM535.3 477.0l3 -3.2l3 3.2l-3 3.2zM535.6 474.9l3 -3.2l3 3.2l-3 3.2zM536.7 472.1l3 -3.2l3 3.2l-3 3.2zM537.3 469.3l3 -3.2l3 3.2l-3 3.2zM539.2 467.3l3 -3.2l3 3.2l-3 3.2zM540.6 465.5l3 -3.2l3 3.2l-3 3.2zM542.3 464.2l3 -3.2l3 3.2l-3 3.2zM544.2 463.1l3 -3.2l3 3.2l-3 3.2zM546.7 462.2l3 -3.2l3 3.2l-3 3.2zM549.9 461.8l3 -3.2l3 3.2l-3 3.2zM551.4 461.9l3 -3.2l3 3.2l-3 3.2zM553.5 461.5l3 -3.2l3 3.2l-3 3.2zM555.9 460.7l3 -3.2l3 3.2l-3 3.2zM558.1 458.9l3 -3.2l3 3.2l-3 3.2zM559.3 457.0l3 -3.2l3 3.2l-3 3.2zM561.0 455.5l3 -3.2l3 3.2l-3 3.2zM562.7 448.2l3 -3.2l3 3.2l-3 3.2zM567.3 437.4l3 -3.2l3 3.2l-3 3.2zM576.6 423.7l3 -3.2l3 3.2l-3 3.2zM592.2 406.0l3 -3.2l3 3.2l-3 3.2zM618.8 391.1l3 -3.2l3 3.2l-3 3.2zM648.4 380.9l3 -3.2l3 3.2l-3 3.2zM681.4 378.5l3 -3.2l3 3.2l-3 3.2zM712.3 383.5l3 -3.2l3 3.2l-3 3.2zM738.8 394.5l3 -3.2l3 3.2l-3 3.2zM761.2 405.4l3 -3.2l3 3.2l-3 3.2zM778.8 414.5l3 -3.2l3 3.2l-3 3.2zM787.4 418.1l3 -3.2l3 3.2l-3 3.2zM792.1 422.7l3 -3.2l3 3.2l-3 3.2z" fill="none" stroke="#49dcc0" stroke-width="1"/><path d="M536.9 479.3L538.1 477.0L539.2 474.5L539.8 471.8L541.1 469.2L542.7 467.8L544.7 465.3L545.5 464.1L547.4 462.8L549.8 462.2L552.3 461.6L554.6 461.6L557.5 460.7L558.8 460.9L560.6 458.8L561.8 456.7L563.9 455.3L566.2 449.4L570.3 437.6L579.8 423.7L595.2 405.8L621.2 390.7L651.2 380.2L684.5 377.3L715.9 382.0L742.7 393.0L765.0 403.9L783.0 413.2L791.8 416.8L796.9 422.0" fill="none" stroke="#a9e87c" stroke-width="1.1"/><path d="M533.9 476.3h6v6h-6zm0 3h6m-3 -3v6M535.1 474.0h6v6h-6zm0 3h6m-3 -3v6M536.2 471.5h6v6h-6zm0 3h6m-3 -3v6M536.8 468.8h6v6h-6zm0 3h6m-3 -3v6M538.1 466.2h6v6h-6zm0 3h6m-3 -3v6M539.7 464.8h6v6h-6zm0 3h6m-3 -3v6M541.7 462.3h6v6h-6zm0 3h6m-3 -3v6M542.5 461.1h6v6h-6zm0 3h6m-3 -3v6M544.4 459.8h6v6h-6zm0 3h6m-3 -3v6M546.8 459.2h6v6h-6zm0 3h6m-3 -3v6M549.3 458.6h6v6h-6zm0 3h6m-3 -3v6M551.6 458.6h6v6h-6zm0 3h6m-3 -3v6M554.5 457.7h6v6h-6zm0 3h6m-3 -3v6M555.8 457.9h6v6h-6zm0 3h6m-3 -3v6M557.6 455.8h6v6h-6zm0 3h6m-3 -3v6M558.8 453.7h6v6h-6zm0 3h6m-3 -3v6M560.9 452.3h6v6h-6zm0 3h6m-3 -3v6M563.2 446.4h6v6h-6zm0 3h6m-3 -3v6M567.3 434.6h6v6h-6zm0 3h6m-3 -3v6M576.8 420.7h6v6h-6zm0 3h6m-3 -3v6M592.2 402.8h6v6h-6zm0 3h6m-3 -3v6M618.2 387.7h6v6h-6zm0 3h6m-3 -3v6M648.2 377.2h6v6h-6zm0 3h6m-3 -3v6M681.5 374.3h6v6h-6zm0 3h6m-3 -3v6M712.9 379.0h6v6h-6zm0 3h6m-3 -3v6M739.7 390.0h6v6h-6zm0 3h6m-3 -3v6M762.0 400.9h6v6h-6zm0 3h6m-3 -3v6M780.0 410.2h6v6h-6zm0 3h6m-3 -3v6M788.8 413.8h6v6h-6zm0 3h6m-3 -3v6M793.9 419.0h6v6h-6zm0 3h6m-3 -3v6" fill="none" stroke="#a9e87c" stroke-width="1"/><path d="M537.3 479.6L538.4 476.3L539.3 474.7L540.4 471.8L540.4 469.5L543.0 467.4L544.3 465.0L546.1 463.5L547.6 462.6L549.7 462.5L552.8 461.2L554.7 461.6L556.9 461.2L559.7 460.1L560.8 459.0L562.4 457.2L563.7 455.2L565.3 449.3L571.0 437.5L579.7 423.5L595.2 405.6L620.6 390.3L650.9 379.5L684.6 376.0L716.5 380.5L743.6 391.5L765.8 402.4L784.2 411.9L793.2 415.6L798.7 421.2" fill="none" stroke="#4a4a4a" stroke-width="1.1"/><path d="M534.3 479.6l3 -3.2l3 3.2l-3 3.2zM535.4 476.3l3 -3.2l3 3.2l-3 3.2zM536.3 474.7l3 -3.2l3 3.2l-3 3.2zM537.4 471.8l3 -3.2l3 3.2l-3 3.2zM537.4 469.5l3 -3.2l3 3.2l-3 3.2zM540.0 467.4l3 -3.2l3 3.2l-3 3.2zM541.3 465.0l3 -3.2l3 3.2l-3 3.2zM543.1 463.5l3 -3.2l3 3.2l-3 3.2zM544.6 462.6l3 -3.2l3 3.2l-3 3.2zM546.7 462.5l3 -3.2l3 3.2l-3 3.2zM549.8 461.2l3 -3.2l3 3.2l-3 3.2zM551.7 461.6l3 -3.2l3 3.2l-3 3.2zM553.9 461.2l3 -3.2l3 3.2l-3 3.2zM556.7 460.1l3 -3.2l3 3.2l-3 3.2zM557.8 459.0l3 -3.2l3 3.2l-3 3.2zM559.4 457.2l3 -3.2l3 3.2l-3 3.2zM560.7 455.2l3 -3.2l3 3.2l-3 3.2zM562.3 449.3l3 -3.2l3 3.2l-3 3.2zM568.0 437.5l3 -3.2l3 3.2l-3 3.2zM576.7 423.5l3 -3.2l3 3.2l-3 3.2zM592.2 405.6l3 -3.2l3 3.2l-3 3.2zM617.6 390.3l3 -3.2l3 3.2l-3 3.2zM647.9 379.5l3 -3.2l3 3.2l-3 3.2zM681.6 376.0l3 -3.2l3 3.2l-3 3.2zM713.5 380.5l3 -3.2l3 3.2l-3 3.2zM740.6 391.5l3 -3.2l3 3.2l-3 3.2zM762.8 402.4l3 -3.2l3 3.2l-3 3.2zM781.2 411.9l3 -3.2l3 3.2l-3 3.2zM790.2 415.6l3 -3.2l3 3.2l-3 3.2zM795.7 421.2l3 -3.2l3 3.2l-3 3.2z" fill="none" stroke="#4a4a4a" stroke-width="1"/><path d="M537.6 478.6L538.4 476.3L539.1 473.9L540.4 471.3L540.7 468.8L542.2 467.0L544.8 465.4L546.0 463.7L547.8 462.5L550.3 462.2L552.6 461.9L554.8 461.2L557.7 460.8L559.3 460.6L561.4 458.7L562.0 457.1L563.5 455.1L566.3 448.3L570.5 437.7L579.4 423.3L595.2 405.4L620.0 389.9L650.7 378.8L684.7 374.8L717.1 378.9L744.5 389.9L766.7 400.8L785.4 410.5L794.6 414.3L800.5 420.5" fill="none" stroke="#9c9c9c" stroke-width="1.1"/><path d="M534.6 478.6a3 3 0 1 0 6 0a3 3 0 1 0 -6 0M534.6 478.6h6m-3 -3v6M535.4 476.3a3 3 0 1 0 6 0a3 3 0 1 0 -6 0M535.4 476.3h6m-3 -3v6M536.1 473.9a3 3 0 1 0 6 0a3 3 0 1 0 -6 0M536.1 473.9h6m-3 -3v6M537.4 471.3a3 3 0 1 0 6 0a3 3 0 1 0 -6 0M537.4 471.3h6m-3 -3v6M537.7 468.8a3 3 0 1 0 6 0a3 3 0 1 0 -6 0M537.7 468.8h6m-3 -3v6M539.2 467.0a3 3 0 1 0 6 0a3 3 0 1 0 -6 0M539.2 467.0h6m-3 -3v6M541.8 465.4a3 3 0 1 0 6 0a3 3 0 1 0 -6 0M541.8 465.4h6m-3 -3v6M543.0 463.7a3 3 0 1 0 6 0a3 3 0 1 0 -6 0M543.0 463.7h6m-3 -3v6M544.8 462.5a3 3 0 1 0 6 0a3 3 0 1 0 -6 0M544.8 462.5h6m-3 -3v6M547.3 462.2a3 3 0 1 0 6 0a3 3 0 1 0 -6 0M547.3 462.2h6m-3 -3v6M549.6 461.9a3 3 0 1 0 6 0a3 3 0 1 0 -6 0M549.6 461.9h6m-3 -3v6M551.8 461.2a3 3 0 1 0 6 0a3 3 0 1 0 -6 0M551.8 461.2h6m-3 -3v6M554.7 460.8a3 3 0 1 0 6 0a3 3 0 1 0 -6 0M554.7 460.8h6m-3 -3v6M556.3 460.6a3 3 0 1 0 6 0a3 3 0 1 0 -6 0M556.3 460.6h6m-3 -3v6M558.4 458.7a3 3 0 1 0 6 0a3 3 0 1 0 -6 0M558.4 458.7h6m-3 -3v6M559.0 457.1a3 3 0 1 0 6 0a3 3 0 1 0 -6 0M559.0 457.1h6m-3 -3v6M560.5 455.1a3 3 0 1 0 6 0a3 3 0 1 0 -6 0M560.5 455.1h6m-3 -3v6M563.3 448.3a3 3 0 1 0 6 0a3 3 0 1 0 -6 0M563.3 448.3h6m-3 -3v6M567.5 437.7a3 3 0 1 0 6 0a3 3 0 1 0 -6 0M567.5 437.7h6m-3 -3v6M576.4 423.3a3 3 0 1 0 6 0a3 3 0 1 0 -6 0M576.4 423.3h6m-3 -3v6M592.2 405.4a3 3 0 1 0 6 0a3 3 0 1 0 -6 0M592.2 405.4h6m-3 -3v6M617.0 389.9a3 3 0 1 0 6 0a3 3 0 1 0 -6 0M617.0 389.9h6m-3 -3v6M647.7 378.8a3 3 0 1 0 6 0a3 3 0 1 0 -6 0M647.7 378.8h6m-3 -3v6M681.7 374.8a3 3 0 1 0 6 0a3 3 0 1 0 -6 0M681.7 374.8h6m-3 -3v6M714.1 378.9a3 3 0 1 0 6 0a3 3 0 1 0 -6 0M714.1 378.9h6m-3 -3v6M741.5 389.9a3 3 0 1 0 6 0a3 3 0 1 0 -6 0M741.5 389.9h6m-3 -3v6M763.7 400.8a3 3 0 1 0 6 0a3 3 0 1 0 -6 0M763.7 400.8h6m-3 -3v6M782.4 410.5a3 3 0 1 0 6 0a3 3 0 1 0 -6 0M782.4 410.5h6m-3 -3v6M791.6 414.3a3 3 0 1 0 6 0a3 3 0 1 0 -6 0M791.6 414.3h6m-3 -3v6M797.5 420.5a3 3 0 1 0 6 0a3 3 0 1 0 -6 0M797.5 420.5h6m-3 -3v6" fill="none" stroke="#9c9c9c" stroke-width="1"/><path d="M537.2 478.6L538.1 476.2L539.6 474.1L540.5 471.6L541.4 468.6L542.9 466.5L544.6 465.2L546.1 463.4L547.4 462.3L550.8 462.4L553.3 461.9L555.5 460.8L557.4 460.9L559.8 460.5L561.1 458.1L563.1 456.4L564.6 454.4L566.4 448.6L570.9 436.7L579.8 423.3L595.2 405.2L619.4 389.4L650.4 378.0L684.7 373.6L717.7 377.4L745.5 388.4L767.5 399.3L786.5 409.2L796.0 413.0L802.4 419.7" fill="none" stroke="#000000" stroke-width="1.1"/><path d="M534.2 478.6l3 -3.2l3 3.2l-3 3.2zM535.1 476.2l3 -3.2l3 3.2l-3 3.2zM536.6 474.1l3 -3.2l3 3.2l-3 3.2zM537.5 471.6l3 -3.2l3 3.2l-3 3.2zM538.4 468.6l3 -3.2l3 3.2l-3 3.2zM539.9 466.5l3 -3.2l3 3.2l-3 3.2zM541.6 465.2l3 -3.2l3 3.2l-3 3.2zM543.1 463.4l3 -3.2l3 3.2l-3 3.2zM544.4 462.3l3 -3.2l3 3.2l-3 3.2zM547.8 462.4l3 -3.2l3 3.2l-3 3.2zM550.3 461.9l3 -3.2l3 3.2l-3 3.2zM552.5 460.8l3 -3.2l3 3.2l-3 3.2zM554.4 460.9l3 -3.2l3 3.2l-3 3.2zM556.8 460.5l3 -3.2l3 3.2l-3 3.2zM558.1 458.1l3 -3.2l3 3.2l-3 3.2zM560.1 456.4l3 -3.2l3 3.2l-3 3.2zM561.6 454.4l3 -3.2l3 3.2l-3 3.2zM563.4 448.6l3 -3.2l3 3.2l-3 3.2zM567.9 436.7l3 -3.2l3 3.2l-3 3.2zM576.8 423.3l3 -3.2l3 3.2l-3 3.2zM592.2 405.2l3 -3.2l3 3.2l-3 3.2zM616.4 389.4l3 -3.2l3 3.2l-3 3.2zM647.4 378.0l3 -3.2l3 3.2l-3 3.2zM681.7 373.6l3 -3.2l3 3.2l-3 3.2zM714.7 377.4l3 -3.2l3 3.2l-3 3.2zM742.5 388.4l3 -3.2l3 3.2l-3 3.2zM764.5 399.3l3 -3.2l3 3.2l-3 3.2zM783.5 409.2l3 -3.2l3 3.2l-3 3.2zM793.0 413.0l3 -3.2l3 3.2l-3 3.2zM799.4 419.7l3 -3.2l3 3.2l-3 3.2z" fill="none" stroke="#000000" stroke-width="1"/><path d="M539.5 480.5L540.2 478.1L541.5 475.0L542.0 473.1L543.0 470.2L544.9 468.2L546.7 466.4L547.5 465.5L548.9 464.2L552.2 463.8L555.1 462.8L556.6 462.3L558.7 462.3L560.9 461.5L562.6 459.9L564.5 458.1L565.8 455.9L565.5 448.4L570.8 436.7L580.1 424.0L595.2 405.0L618.8 389.0L650.2 377.3L684.8 372.3L718.3 375.9L746.4 386.9L768.4 397.8L787.7 407.9L797.4 411.8L804.2 419.0" fill="none" stroke="#1b7dc2" stroke-width="1.1"/><path d="M536.0 477.0l7 7m0 -7l-7 7M536.7 474.6l7 7m0 -7l-7 7M538.0 471.5l7 7m0 -7l-7 7M538.5 469.6l7 7m0 -7l-7 7M539.5 466.7l7 7m0 -7l-7 7M541.4 464.7l7 7m0 -7l-7 7M543.2 462.9l7 7m0 -7l-7 7M544.0 462.0l7 7m0 -7l-7 7M545.4 460.7l7 7m0 -7l-7 7M548.7 460.3l7 7m0 -7l-7 7M551.6 459.3l7 7m0 -7l-7 7M553.1 458.8l7 7m0 -7l-7 7M555.2 458.8l7 7m0 -7l-7 7M557.4 458.0l7 7m0 -7l-7 7M559.1 456.4l7 7m0 -7l-7 7M561.0 454.6l7 7m0 -7l-7 7M562.3 452.4l7 7m0 -7l-7 7M562.0 444.9l7 7m0 -7l-7 7M567.3 433.2l7 7m0 -7l-7 7M576.6 420.5l7 7m0 -7l-7 7M591.7 401.5l7 7m0 -7l-7 7M615.3 385.5l7 7m0 -7l-7 7M646.7 373.8l7 7m0 -7l-7 7M681.3 368.8l7 7m0 -7l-7 7M714.8 372.4l7 7m0 -7l-7 7M742.9 383.4l7 7m0 -7l-7 7M764.9 394.3l7 7m0 -7l-7 7M784.2 404.4l7 7m0 -7l-7 7M793.9 408.3l7 7m0 -7l-7 7M800.7 415.5l7 7m0 -7l-7 7" fill="none" stroke="#1b7dc2" stroke-width="1"/><path d="M537.8 478.2L538.5 475.9L539.4 473.5L540.9 471.5L541.7 469.0L542.9 467.2L544.8 464.3L546.6 463.2L548.2 462.4L550.4 461.6L553.6 461.3L555.5 460.5L557.5 460.6L559.8 460.3L561.5 458.1L562.4 456.6L564.2 454.6L565.2 448.3L570.4 437.6L579.4 424.1L595.2 404.8L618.2 388.6L649.9 376.6L684.9 371.1L718.9 374.4L747.3 385.4L769.2 396.3L788.9 406.6L798.8 410.5L806.0 418.2" fill="none" stroke="#cc2f2f" stroke-width="1.1"/><path d="M534.8 478.2l3 -3.2l3 3.2l-3 3.2zM535.5 475.9l3 -3.2l3 3.2l-3 3.2zM536.4 473.5l3 -3.2l3 3.2l-3 3.2zM537.9 471.5l3 -3.2l3 3.2l-3 3.2zM538.7 469.0l3 -3.2l3 3.2l-3 3.2zM539.9 467.2l3 -3.2l3 3.2l-3 3.2zM541.8 464.3l3 -3.2l3 3.2l-3 3.2zM543.6 463.2l3 -3.2l3 3.2l-3 3.2zM545.2 462.4l3 -3.2l3 3.2l-3 3.2zM547.4 461.6l3 -3.2l3 3.2l-3 3.2zM550.6 461.3l3 -3.2l3 3.2l-3 3.2zM552.5 460.5l3 -3.2l3 3.2l-3 3.2zM554.5 460.6l3 -3.2l3 3.2l-3 3.2zM556.8 460.3l3 -3.2l3 3.2l-3 3.2zM558.5 458.1l3 -3.2l3 3.2l-3 3.2zM559.4 456.6l3 -3.2l3 3.2l-3 3.2zM561.2 454.6l3 -3.2l3 3.2l-3 3.2zM562.2 448.3l3 -3.2l3 3.2l-3 3.2zM567.4 437.6l3 -3.2l3 3.2l-3 3.2zM576.4 424.1l3 -3.2l3 3.2l-3 3.2zM592.2 404.8l3 -3.2l3 3.2l-3 3.2zM615.2 388.6l3 -3.2l3 3.2l-3 3.2zM646.9 376.6l3 -3.2l3 3.2l-3 3.2zM681.9 371.1l3 -3.2l3 3.2l-3 3.2zM715.9 374.4l3 -3.2l3 3.2l-3 3.2zM744.3 385.4l3 -3.2l3 3.2l-3 3.2zM766.2 396.3l3 -3.2l3 3.2l-3 3.2zM785.9 406.6l3 -3.2l3 3.2l-3 3.2zM795.8 410.5l3 -3.2l3 3.2l-3 3.2zM803.0 418.2l3 -3.2l3 3.2l-3 3.2z" fill="none" stroke="#cc2f2f" stroke-width="1"/><path d="M536.3 594.2L532.2 557.6L529.6 531.2L529.3 513.6L529.6 505.0L530.5 497.0L532.0 490.0L534.0 484.0L537.0 479.5" fill="none" stroke="#1b7dc2" stroke-width="2.8"/><path d="M533.6 591.0l7 7m0 -7l-7 7M533.4 590.3l7 7m0 -7l-7 7M531.4 586.4l7 7m0 -7l-7 7M531.4 586.5l7 7m0 -7l-7 7M532.5 582.2l7 7m0 -7l-7 7M532.7 582.5l7 7m0 -7l-7 7M530.6 578.7l7 7m0 -7l-7 7M531.3 578.2l7 7m0 -7l-7 7M531.0 575.2l7 7m0 -7l-7 7M531.6 574.1l7 7m0 -7l-7 7M531.5 569.9l7 7m0 -7l-7 7M530.3 570.2l7 7m0 -7l-7 7M531.2 565.5l7 7m0 -7l-7 7M530.4 566.3l7 7m0 -7l-7 7M528.8 562.5l7 7m0 -7l-7 7M530.3 562.7l7 7m0 -7l-7 7M528.1 558.6l7 7m0 -7l-7 7M528.8 558.7l7 7m0 -7l-7 7M528.8 553.4l7 7m0 -7l-7 7M529.3 554.2l7 7m0 -7l-7 7M528.2 549.9l7 7m0 -7l-7 7M528.1 549.0l7 7m0 -7l-7 7M528.8 545.0l7 7m0 -7l-7 7M527.3 544.6l7 7m0 -7l-7 7M527.9 541.6l7 7m0 -7l-7 7M527.3 541.4l7 7m0 -7l-7 7M526.6 536.3l7 7m0 -7l-7 7M526.5 536.2l7 7m0 -7l-7 7M526.7 531.8l7 7m0 -7l-7 7M525.5 532.4l7 7m0 -7l-7 7M525.6 527.5l7 7m0 -7l-7 7M525.3 527.0l7 7m0 -7l-7 7M526.4 523.2l7 7m0 -7l-7 7M527.1 522.5l7 7m0 -7l-7 7M526.7 518.1l7 7m0 -7l-7 7M525.2 518.1l7 7m0 -7l-7 7M525.9 514.3l7 7m0 -7l-7 7M525.4 515.3l7 7m0 -7l-7 7M526.0 510.8l7 7m0 -7l-7 7M526.7 509.8l7 7m0 -7l-7 7M526.3 505.3l7 7m0 -7l-7 7M525.6 506.1l7 7m0 -7l-7 7M526.3 500.8l7 7m0 -7l-7 7M525.1 501.9l7 7m0 -7l-7 7M527.0 497.7l7 7m0 -7l-7 7M525.9 498.0l7 7m0 -7l-7 7M527.2 492.9l7 7m0 -7l-7 7M526.2 493.7l7 7m0 -7l-7 7M528.9 490.1l7 7m0 -7l-7 7M527.3 490.3l7 7m0 -7l-7 7M527.8 486.7l7 7m0 -7l-7 7M528.3 485.7l7 7m0 -7l-7 7M529.5 483.5l7 7m0 -7l-7 7M530.5 483.8l7 7m0 -7l-7 7M530.0 480.7l7 7m0 -7l-7 7M529.9 480.7l7 7m0 -7l-7 7M533.7 476.2l7 7m0 -7l-7 7M532.7 476.3l7 7m0 -7l-7 7" fill="none" stroke="#1b7dc2" stroke-width="1.3"/><path d="M536.3 594.2L535.3 644.0" fill="none" stroke="#1b7dc2" stroke-width="1.1"/><path d="M531.8 640.5l7 7m0 -7l-7 7" fill="none" stroke="#1b7dc2" stroke-width="1"/><path d="M536.3 594.2L541.4 655.0" fill="none" stroke="#1b7dc2" stroke-width="1.1"/><path d="M537.9 651.5l7 7m0 -7l-7 7" fill="none" stroke="#1b7dc2" stroke-width="1"/><path d="M536.3 594.2L552.9 645.8" fill="none" stroke="#1b7dc2" stroke-width="1.1"/><path d="M549.4 642.3l7 7m0 -7l-7 7" fill="none" stroke="#1b7dc2" stroke-width="1"/><path d="M536.3 594.2L553.9 648.0" fill="none" stroke="#1b7dc2" stroke-width="1.1"/><path d="M550.4 644.5l7 7m0 -7l-7 7" fill="none" stroke="#1b7dc2" stroke-width="1"/><path d="M536.3 594.2L538.0 641.0" fill="none" stroke="#1b7dc2" stroke-width="1.1"/><path d="M534.5 637.5l7 7m0 -7l-7 7" fill="none" stroke="#1b7dc2" stroke-width="1"/><path d="M536.3 594.2L545.0 643.0" fill="none" stroke="#1b7dc2" stroke-width="1.1"/><path d="M541.5 639.5l7 7m0 -7l-7 7" fill="none" stroke="#1b7dc2" stroke-width="1"/><path d="M536.3 594.2L549.0 640.0" fill="none" stroke="#1b7dc2" stroke-width="1.1"/><path d="M545.5 636.5l7 7m0 -7l-7 7" fill="none" stroke="#1b7dc2" stroke-width="1"/><path d="M536.3 594.2L551.0 650.0" fill="none" stroke="#1b7dc2" stroke-width="1.1"/><path d="M547.5 646.5l7 7m0 -7l-7 7" fill="none" stroke="#1b7dc2" stroke-width="1"/><path d="M536.3 594.2L540.0 648.0" fill="none" stroke="#1b7dc2" stroke-width="1.1"/><path d="M536.5 644.5l7 7m0 -7l-7 7" fill="none" stroke="#1b7dc2" stroke-width="1"/><path d="M536.3 594.2L544.0 651.0" fill="none" stroke="#1b7dc2" stroke-width="1.1"/><path d="M540.5 647.5l7 7m0 -7l-7 7" fill="none" stroke="#1b7dc2" stroke-width="1"/><path d="M534.1 480.0l3 -3.2l3 3.2l-3 3.2zM533.1 480.0l3 -3.2l3 3.2l-3 3.2zM534.9 479.7l3 -3.2l3 3.2l-3 3.2zM534.2 477.9l3 -3.2l3 3.2l-3 3.2zM535.0 476.6l3 -3.2l3 3.2l-3 3.2zM535.1 477.7l3 -3.2l3 3.2l-3 3.2zM535.0 474.7l3 -3.2l3 3.2l-3 3.2zM536.0 475.4l3 -3.2l3 3.2l-3 3.2zM534.8 474.6l3 -3.2l3 3.2l-3 3.2zM537.1 472.4l3 -3.2l3 3.2l-3 3.2zM537.3 472.4l3 -3.2l3 3.2l-3 3.2zM536.9 472.3l3 -3.2l3 3.2l-3 3.2zM536.8 470.3l3 -3.2l3 3.2l-3 3.2zM537.5 468.6l3 -3.2l3 3.2l-3 3.2zM538.1 470.0l3 -3.2l3 3.2l-3 3.2z" fill="#cc2f2f" fill-opacity=".55" stroke="#cc2f2f" stroke-width="1"/><path d="M445.0 837.5h32" stroke="#1b7dc2" stroke-width="1.2" fill="none"/><path d="M457.0 834.0l7 7m0 -7l-7 7" fill="none" stroke="#1b7dc2" stroke-width="1"/><text x="483.4" y="838.8" fill="#111" textLength="113" lengthAdjust="spacing">Cycling_EIS_NCR18</text><path d="M606.0 837.5h32" stroke="#cc2f2f" stroke-width="1.2" fill="none"/><path d="M618.5 837.5l3 -3.2l3 3.2l-3 3.2z" fill="none" stroke="#cc2f2f" stroke-width="1"/><text x="644.4" y="838.8" fill="#111" textLength="113" lengthAdjust="spacing">Cycling_EIS_NCR18</text><path d="M767.0 837.5h32" stroke="#f2a535" stroke-width="1.2" fill="none"/><path d="M779.5 837.5a3 3 0 1 0 6 0a3 3 0 1 0 -6 0" fill="none" stroke="#f2a535" stroke-width="1"/><text x="805.4" y="838.8" fill="#111" textLength="113" lengthAdjust="spacing">Cycling_EIS_NCR18</text><path d="M445.0 858.5h32" stroke="#ece52a" stroke-width="1.2" fill="none"/><path d="M457.5 858.5l3 -3.2l3 3.2l-3 3.2z" fill="none" stroke="#ece52a" stroke-width="1"/><text x="483.4" y="859.8" fill="#111" textLength="113" lengthAdjust="spacing">Cycling_EIS_NCR18</text><path d="M606.0 858.5h32" stroke="#8b4a1c" stroke-width="1.2" fill="none"/><path d="M618.5 855.5h6v6h-6z" fill="none" stroke="#8b4a1c" stroke-width="1"/><text x="644.4" y="859.8" fill="#111" textLength="113" lengthAdjust="spacing">Cycling_EIS_NCR18</text><path d="M767.0 858.5h32" stroke="#6fcf2a" stroke-width="1.2" fill="none"/><path d="M779.5 858.5l3 -3.2l3 3.2l-3 3.2z" fill="none" stroke="#6fcf2a" stroke-width="1"/><text x="805.4" y="859.8" fill="#111" textLength="113" lengthAdjust="spacing">Cycling_EIS_NCR18</text><path d="M445.0 879.5h32" stroke="#3f7a12" stroke-width="1.2" fill="none"/><path d="M457.0 879.5h7m-3.5 -3.5v7m-2.5 -6l5 5m0 -5l-5 5" fill="none" stroke="#3f7a12" stroke-width="1"/><text x="483.4" y="880.8" fill="#111" textLength="113" lengthAdjust="spacing">Cycling_EIS_NCR18</text><path d="M606.0 879.5h32" stroke="#b52be8" stroke-width="1.2" fill="none"/><path d="M618.5 879.5l3 -3.2l3 3.2l-3 3.2z" fill="none" stroke="#b52be8" stroke-width="1"/><text x="644.4" y="880.8" fill="#111" textLength="113" lengthAdjust="spacing">Cycling_EIS_NCR18</text><path d="M767.0 879.5h32" stroke="#8a2be2" stroke-width="1.2" fill="none"/><path d="M779.5 877.0h6l-3 5.5z" fill="none" stroke="#8a2be2" stroke-width="1"/><text x="805.4" y="880.8" fill="#111" textLength="113" lengthAdjust="spacing">Cycling_EIS_NCR18</text><path d="M445.0 900.5h32" stroke="#49dcc0" stroke-width="1.2" fill="none"/><path d="M457.5 900.5l3 -3.2l3 3.2l-3 3.2z" fill="none" stroke="#49dcc0" stroke-width="1"/><text x="483.4" y="901.8" fill="#111" textLength="113" lengthAdjust="spacing">Cycling_EIS_NCR18</text><path d="M606.0 900.5h32" stroke="#a9e87c" stroke-width="1.2" fill="none"/><path d="M618.5 897.5h6v6h-6zm0 3h6m-3 -3v6" fill="none" stroke="#a9e87c" stroke-width="1"/><text x="644.4" y="901.8" fill="#111" textLength="113" lengthAdjust="spacing">Cycling_EIS_NCR18</text><path d="M767.0 900.5h32" stroke="#4a4a4a" stroke-width="1.2" fill="none"/><path d="M779.5 900.5l3 -3.2l3 3.2l-3 3.2z" fill="none" stroke="#4a4a4a" stroke-width="1"/><text x="805.4" y="901.8" fill="#111" textLength="113" lengthAdjust="spacing">Cycling_EIS_NCR18</text><path d="M445.0 921.5h32" stroke="#9c9c9c" stroke-width="1.2" fill="none"/><path d="M457.5 921.5a3 3 0 1 0 6 0a3 3 0 1 0 -6 0M457.5 921.5h6m-3 -3v6" fill="none" stroke="#9c9c9c" stroke-width="1"/><text x="483.4" y="922.8" fill="#111" textLength="113" lengthAdjust="spacing">Cycling_EIS_NCR18</text><path d="M606.0 921.5h32" stroke="#000000" stroke-width="1.2" fill="none"/><path d="M618.5 921.5l3 -3.2l3 3.2l-3 3.2z" fill="none" stroke="#000000" stroke-width="1"/><text x="644.4" y="922.8" fill="#111" textLength="113" lengthAdjust="spacing">Cycling_EIS_NCR18</text><path d="M767.0 921.5h32" stroke="#1b7dc2" stroke-width="1.2" fill="none"/><path d="M779.0 918.0l7 7m0 -7l-7 7" fill="none" stroke="#1b7dc2" stroke-width="1"/><text x="805.4" y="922.8" fill="#111" textLength="113" lengthAdjust="spacing">Cycling_EIS_NCR18</text><path d="M445.0 942.5h32" stroke="#cc2f2f" stroke-width="1.2" fill="none"/><path d="M457.5 942.5l3 -3.2l3 3.2l-3 3.2z" fill="none" stroke="#cc2f2f" stroke-width="1"/><text x="483.4" y="943.8" fill="#111" textLength="113" lengthAdjust="spacing">Cycling_EIS_NCR18</text></svg>
<div class="abs" style="left:966px;top:191px;width:492px;height:740px;background:#f9f9f9;border:1px solid #fcfcfc"></div>
<div class="abs" style="left:967px;top:930px;width:74px;height:24px;background:#f0f0f0;border:1px solid #f9f9f9;border-top:none"><div class="t" style="left:10px;top:5px;letter-spacing:-0.40px;">A.5 Step 5</div></div>
<div class="abs" style="left:977px;top:201px;width:470px;height:719px;background:#fff;border:1px solid #777;overflow:hidden">
<div class="abs" style="left:0;top:489px;width:21px;height:212px;background:#f0f0f0"></div><div class="abs" style="left:0;top:701px;width:468px;height:16px;background:#f0f0f0"></div><div class="abs" style="left:17px;top:708px;width:78px;height:2px;background:#8c8c8c"></div>
<div class="abs" style="left:22px;top:0;width:100px;height:40px;background:#dddbf1;border-right:1px solid #555;border-bottom:1px solid #555;border-left:1px solid #f4f3fb;border-top:1px solid #f4f3fb"><div class="t b" style="left:15px;top:12.5px;letter-spacing:0.00px;">Z increment</div></div><div class="abs" style="left:122px;top:0;width:100px;height:40px;background:#dddbf1;border-right:1px solid #555;border-bottom:1px solid #555;border-left:1px solid #f4f3fb;border-top:1px solid #f4f3fb"><div class="t b" style="left:0;width:98px;text-align:center;top:14px;font-size:13px">χ<span style="font-size:8px;position:relative;top:-6px;left:0.5px">2</span></div></div><div class="abs" style="left:222px;top:0;width:100px;height:40px;background:#dddbf1;border-right:1px solid #555;border-bottom:1px solid #555;border-left:1px solid #f4f3fb;border-top:1px solid #f4f3fb"><div class="t b" style="left:0;width:98px;text-align:center;top:14px;font-size:13px;letter-spacing:-0.2px">χ<span style="font-size:8px;position:relative;top:-6px;left:0.5px">2</span>/|Z|<span style="font-size:8px;position:relative;top:-6px;left:0.5px">2</span></div></div><div class="abs" style="left:322px;top:0;width:100px;height:40px;background:#dddbf1;border-right:1px solid #555;border-bottom:1px solid #555;border-left:1px solid #f4f3fb;border-top:1px solid #f4f3fb"><div class="t b" style="left:0;width:98px;text-align:center;top:14px;font-size:13px;letter-spacing:-0.3px">χ/√(N)</div></div><div class="abs" style="left:422px;top:0;width:100px;height:40px;background:#dddbf1;border-right:1px solid #555;border-bottom:1px solid #555;border-left:1px solid #f4f3fb;border-top:1px solid #f4f3fb"><div class="t b" style="left:41px;top:3px">R</div><div class="t b" style="left:39px;top:19px">(</div></div>
<div class="abs" style="left:21px;top:39px;width:450px;height:1px;background:#555"></div><div class="abs" style="left:21px;top:39px;width:1px;height:451px;background:#555"></div>
<div class="abs" style="left:121px;top:40px;width:1px;height:450px;background:#d9d9d9"></div><div class="abs" style="left:221px;top:40px;width:1px;height:450px;background:#d9d9d9"></div><div class="abs" style="left:321px;top:40px;width:1px;height:450px;background:#d9d9d9"></div><div class="abs" style="left:421px;top:40px;width:1px;height:450px;background:#d9d9d9"></div>
<div class="abs" style="left:0;top:41px;width:21px;height:29px;background:#dddbf1;border-right:1px solid #555;border-bottom:1px solid #555;border-top:1px solid #f4f3fb;border-left:1px solid #f4f3fb"><div class="t b" style="left:3.5px;top:5.5px;letter-spacing:-0.67px;">1</div></div><div class="abs" style="left:22px;top:69px;width:448px;height:1px;background:#d9d9d9"></div><div class="t" style="left:25.5px;top:46.5px;letter-spacing:-0.67px;">1</div><div class="t" style="left:125.5px;top:46.5px;letter-spacing:-0.63px;">0.0016823</div><div class="t" style="left:225.5px;top:46.5px;letter-spacing:-0.61px;">1.7925</div><div class="t" style="left:325.5px;top:46.5px;letter-spacing:-0.63px;">0.0073667</div><div class="t" style="left:425.5px;top:46.5px;letter-spacing:-0.63px;">0.021531</div>
<div class="abs" style="left:0;top:71px;width:21px;height:29px;background:#dddbf1;border-right:1px solid #555;border-bottom:1px solid #555;border-top:1px solid #f4f3fb;border-left:1px solid #f4f3fb"><div class="t b" style="left:3.5px;top:5.5px;letter-spacing:-0.67px;">2</div></div><div class="abs" style="left:22px;top:99px;width:448px;height:1px;background:#d9d9d9"></div><div class="t" style="left:25.5px;top:76.5px;letter-spacing:-0.67px;">2</div><div class="t" style="left:125.5px;top:76.5px;letter-spacing:-0.63px;">0.0016995</div><div class="t" style="left:225.5px;top:76.5px;letter-spacing:-0.61px;">1.7528</div><div class="t" style="left:325.5px;top:76.5px;letter-spacing:-0.63px;">0.0074042</div><div class="t" style="left:425.5px;top:76.5px;letter-spacing:-0.63px;">0.021333</div>
<div class="abs" style="left:0;top:101px;width:21px;height:29px;background:#dddbf1;border-right:1px solid #555;border-bottom:1px solid #555;border-top:1px solid #f4f3fb;border-left:1px solid #f4f3fb"><div class="t b" style="left:3.5px;top:5.5px;letter-spacing:-0.67px;">3</div></div><div class="abs" style="left:22px;top:129px;width:448px;height:1px;background:#d9d9d9"></div><div class="t" style="left:25.5px;top:106.5px;letter-spacing:-0.67px;">3</div><div class="t" style="left:125.5px;top:106.5px;letter-spacing:-0.63px;">0.0016038</div><div class="t" style="left:225.5px;top:106.5px;letter-spacing:-0.61px;">1.7672</div><div class="t" style="left:325.5px;top:106.5px;letter-spacing:-0.63px;">0.0071927</div><div class="t" style="left:425.5px;top:106.5px;letter-spacing:-0.63px;">0.021318</div>
<div class="abs" style="left:0;top:131px;width:21px;height:29px;background:#dddbf1;border-right:1px solid #555;border-bottom:1px solid #555;border-top:1px solid #f4f3fb;border-left:1px solid #f4f3fb"><div class="t b" style="left:3.5px;top:5.5px;letter-spacing:-0.67px;">4</div></div><div class="abs" style="left:22px;top:159px;width:448px;height:1px;background:#d9d9d9"></div><div class="t" style="left:25.5px;top:136.5px;letter-spacing:-0.67px;">4</div><div class="t" style="left:125.5px;top:136.5px;letter-spacing:-0.63px;">0.0016143</div><div class="t" style="left:225.5px;top:136.5px;letter-spacing:-0.61px;">1.7486</div><div class="t" style="left:325.5px;top:136.5px;letter-spacing:-0.63px;">0.0072162</div><div class="t" style="left:425.5px;top:136.5px;letter-spacing:-0.62px;">0.02139</div>
<div class="abs" style="left:0;top:161px;width:21px;height:29px;background:#dddbf1;border-right:1px solid #555;border-bottom:1px solid #555;border-top:1px solid #f4f3fb;border-left:1px solid #f4f3fb"><div class="t b" style="left:3.5px;top:5.5px;letter-spacing:-0.67px;">5</div></div><div class="abs" style="left:22px;top:189px;width:448px;height:1px;background:#d9d9d9"></div><div class="t" style="left:25.5px;top:166.5px;letter-spacing:-0.67px;">5</div><div class="t" style="left:125.5px;top:166.5px;letter-spacing:-0.63px;">0.0016664</div><div class="t" style="left:225.5px;top:166.5px;letter-spacing:-0.61px;">1.7443</div><div class="t" style="left:325.5px;top:166.5px;letter-spacing:-0.63px;">0.0073318</div><div class="t" style="left:425.5px;top:166.5px;letter-spacing:-0.63px;">0.021427</div>
<div class="abs" style="left:0;top:191px;width:21px;height:29px;background:#dddbf1;border-right:1px solid #555;border-bottom:1px solid #555;border-top:1px solid #f4f3fb;border-left:1px solid #f4f3fb"><div class="t b" style="left:3.5px;top:5.5px;letter-spacing:-0.67px;">6</div></div><div class="abs" style="left:22px;top:219px;width:448px;height:1px;background:#d9d9d9"></div><div class="t" style="left:25.5px;top:196.5px;letter-spacing:-0.67px;">6</div><div class="t" style="left:125.5px;top:196.5px;letter-spacing:-0.63px;">0.0016881</div><div class="t" style="left:225.5px;top:196.5px;letter-spacing:-0.61px;">1.8045</div><div class="t" style="left:325.5px;top:196.5px;letter-spacing:-0.63px;">0.0073794</div><div class="t" style="left:425.5px;top:196.5px;letter-spacing:-0.63px;">0.021377</div>
<div class="abs" style="left:0;top:221px;width:21px;height:29px;background:#dddbf1;border-right:1px solid #555;border-bottom:1px solid #555;border-top:1px solid #f4f3fb;border-left:1px solid #f4f3fb"><div class="t b" style="left:3.5px;top:5.5px;letter-spacing:-0.67px;">7</div></div><div class="abs" style="left:22px;top:249px;width:448px;height:1px;background:#d9d9d9"></div><div class="t" style="left:25.5px;top:226.5px;letter-spacing:-0.67px;">7</div><div class="t" style="left:125.5px;top:226.5px;letter-spacing:-0.63px;">0.0017574</div><div class="t" style="left:225.5px;top:226.5px;letter-spacing:-0.61px;">1.7655</div><div class="t" style="left:325.5px;top:226.5px;letter-spacing:-0.63px;">0.0075293</div><div class="t" style="left:425.5px;top:226.5px;letter-spacing:-0.63px;">0.021493</div>
<div class="abs" style="left:0;top:251px;width:21px;height:29px;background:#dddbf1;border-right:1px solid #555;border-bottom:1px solid #555;border-top:1px solid #f4f3fb;border-left:1px solid #f4f3fb"><div class="t b" style="left:3.5px;top:5.5px;letter-spacing:-0.67px;">8</div></div><div class="abs" style="left:22px;top:279px;width:448px;height:1px;background:#d9d9d9"></div><div class="t" style="left:25.5px;top:256.5px;letter-spacing:-0.67px;">8</div><div class="t" style="left:125.5px;top:256.5px;letter-spacing:-0.63px;">0.0016367</div><div class="t" style="left:225.5px;top:256.5px;letter-spacing:-0.61px;">1.7744</div><div class="t" style="left:325.5px;top:256.5px;letter-spacing:-0.63px;">0.0072661</div><div class="t" style="left:425.5px;top:256.5px;letter-spacing:-0.63px;">0.021489</div>
<div class="abs" style="left:0;top:281px;width:21px;height:29px;background:#dddbf1;border-right:1px solid #555;border-bottom:1px solid #555;border-top:1px solid #f4f3fb;border-left:1px solid #f4f3fb"><div class="t b" style="left:3.5px;top:5.5px;letter-spacing:-0.67px;">9</div></div><div class="abs" style="left:22px;top:309px;width:448px;height:1px;background:#d9d9d9"></div><div class="t" style="left:25.5px;top:286.5px;letter-spacing:-0.67px;">9</div><div class="t" style="left:125.5px;top:286.5px;letter-spacing:-0.63px;">0.0017739</div><div class="t" style="left:225.5px;top:286.5px;letter-spacing:-0.61px;">1.8083</div><div class="t" style="left:325.5px;top:286.5px;letter-spacing:-0.63px;">0.0075645</div><div class="t" style="left:425.5px;top:286.5px;letter-spacing:-0.63px;">0.021519</div>
<div class="abs" style="left:0;top:311px;width:21px;height:29px;background:#dddbf1;border-right:1px solid #555;border-bottom:1px solid #555;border-top:1px solid #f4f3fb;border-left:1px solid #f4f3fb"><div class="t b" style="left:3.5px;top:5.5px;letter-spacing:-0.17px;">10</div></div><div class="abs" style="left:22px;top:339px;width:448px;height:1px;background:#d9d9d9"></div><div class="t" style="left:25.5px;top:316.5px;letter-spacing:-0.67px;">10</div><div class="t" style="left:125.5px;top:316.5px;letter-spacing:-0.63px;">0.001646</div><div class="t" style="left:225.5px;top:316.5px;letter-spacing:-0.61px;">1.7458</div><div class="t" style="left:325.5px;top:316.5px;letter-spacing:-0.63px;">0.0072868</div><div class="t" style="left:425.5px;top:316.5px;letter-spacing:-0.63px;">0.021602</div>
<div class="abs" style="left:0;top:341px;width:21px;height:29px;background:#dddbf1;border-right:1px solid #555;border-bottom:1px solid #555;border-top:1px solid #f4f3fb;border-left:1px solid #f4f3fb"><div class="t b" style="left:3.5px;top:5.5px;letter-spacing:0.16px;">11</div></div><div class="abs" style="left:22px;top:369px;width:448px;height:1px;background:#d9d9d9"></div><div class="t" style="left:25.5px;top:346.5px;letter-spacing:-0.23px;">11</div><div class="t" style="left:125.5px;top:346.5px;letter-spacing:-0.63px;">0.0017426</div><div class="t" style="left:225.5px;top:346.5px;letter-spacing:-0.61px;">1.8142</div><div class="t" style="left:325.5px;top:346.5px;letter-spacing:-0.63px;">0.0074975</div><div class="t" style="left:425.5px;top:346.5px;letter-spacing:-0.63px;">0.021549</div>
<div class="abs" style="left:0;top:371px;width:21px;height:29px;background:#dddbf1;border-right:1px solid #555;border-bottom:1px solid #555;border-top:1px solid #f4f3fb;border-left:1px solid #f4f3fb"><div class="t b" style="left:3.5px;top:5.5px;letter-spacing:-0.17px;">12</div></div><div class="abs" style="left:22px;top:399px;width:448px;height:1px;background:#d9d9d9"></div><div class="t" style="left:25.5px;top:376.5px;letter-spacing:-0.67px;">12</div><div class="t" style="left:125.5px;top:376.5px;letter-spacing:-0.63px;">0.001781</div><div class="t" style="left:225.5px;top:376.5px;letter-spacing:-0.61px;">1.7625</div><div class="t" style="left:325.5px;top:376.5px;letter-spacing:-0.63px;">0.0075797</div><div class="t" style="left:425.5px;top:376.5px;letter-spacing:-0.63px;">0.021686</div>
<div class="abs" style="left:0;top:401px;width:21px;height:29px;background:#dddbf1;border-right:1px solid #555;border-bottom:1px solid #555;border-top:1px solid #f4f3fb;border-left:1px solid #f4f3fb"><div class="t b" style="left:3.5px;top:5.5px;letter-spacing:-0.17px;">13</div></div><div class="abs" style="left:22px;top:429px;width:448px;height:1px;background:#d9d9d9"></div><div class="t" style="left:25.5px;top:406.5px;letter-spacing:-0.67px;">13</div><div class="t" style="left:125.5px;top:406.5px;letter-spacing:-0.63px;">0.0016458</div><div class="t" style="left:225.5px;top:406.5px;letter-spacing:-0.61px;">1.7606</div><div class="t" style="left:325.5px;top:406.5px;letter-spacing:-0.63px;">0.0072863</div><div class="t" style="left:425.5px;top:406.5px;letter-spacing:-0.63px;">0.021651</div>
<div class="abs" style="left:0;top:431px;width:21px;height:29px;background:#dddbf1;border-right:1px solid #555;border-bottom:1px solid #555;border-top:1px solid #f4f3fb;border-left:1px solid #f4f3fb"><div class="t b" style="left:3.5px;top:5.5px;letter-spacing:-0.17px;">14</div></div><div class="abs" style="left:22px;top:459px;width:448px;height:1px;background:#d9d9d9"></div><div class="t" style="left:25.5px;top:436.5px;letter-spacing:-0.67px;">14</div><div class="t" style="left:125.5px;top:436.5px;letter-spacing:-0.63px;">0.0018499</div><div class="t" style="left:225.5px;top:436.5px;letter-spacing:-0.61px;">1.8156</div><div class="t" style="left:325.5px;top:436.5px;letter-spacing:-0.63px;">0.0077249</div><div class="t" style="left:425.5px;top:436.5px;letter-spacing:-0.63px;">0.021667</div>
<div class="abs" style="left:0;top:461px;width:21px;height:29px;background:#dddbf1;border-right:1px solid #555;border-bottom:1px solid #555;border-top:1px solid #f4f3fb;border-left:1px solid #f4f3fb"><div class="t b" style="left:3.5px;top:5.5px;letter-spacing:-0.17px;">15</div></div><div class="abs" style="left:22px;top:489px;width:448px;height:1px;background:#d9d9d9"></div><div class="t" style="left:25.5px;top:466.5px;letter-spacing:-0.67px;">15</div><div class="t" style="left:125.5px;top:466.5px;letter-spacing:-0.63px;">0.0017446</div><div class="t" style="left:225.5px;top:466.5px;letter-spacing:-0.61px;">1.7513</div><div class="t" style="left:325.5px;top:466.5px;letter-spacing:-0.63px;">0.0075018</div><div class="t" style="left:425.5px;top:466.5px;letter-spacing:-0.63px;">0.021766</div>
</div>
<div class="abs" style="left:418px;top:976px;width:1063px;height:26px;background:#1c9be6"></div>
<div class="abs" style="left:418px;top:976px;width:28px;height:24px;background:#55b3ea"><svg class="abs" style="left:7px;top:5px" width="14" height="14" viewBox="0 0 14 14" stroke="#fff" stroke-width="2"><path d="M7 0V14M0 7H14"/></svg></div>
<div class="abs white" style="left:446px;top:974px;width:72px;height:28px"><div class="t b" style="left:12px;top:6.5px;letter-spacing:-0.12px;">Onglet 1</div></div>
<div class="abs" style="left:1483px;top:532px;width:2px;height:14px"><i class="abs" style="left:0;top:0;width:3px;height:3px;background:#b4b4b4;border-radius:1.5px"></i><i class="abs" style="left:0;top:6px;width:3px;height:3px;background:#b4b4b4;border-radius:1.5px"></i><i class="abs" style="left:0;top:12px;width:3px;height:3px;background:#b4b4b4;border-radius:1.5px"></i></div>
<div class="abs white" style="left:1490px;top:77px;width:28px;height:925px"><svg class="abs" style="left:7px;top:5px" width="15" height="15" viewBox="0 0 15 15" fill="none" stroke="#111" stroke-width="1.3"><path d="M0.5 1H7M0.5 14H7M0.5 7.5H13.5M10 4L13.5 7.5L10 11"/></svg></div>
<div class="abs white" style="left:1522px;top:77px;width:397px;height:925px"></div>
<div class="abs hdr" style="left:1522px;top:77px;width:397px;height:30px"></div>
<div class="t b" style="left:1531px;top:84.6px;letter-spacing:-0.11px;">Outil 1 Properties</div>
<svg class="abs" style="left:1890px;top:86px" width="14" height="12" viewBox="0 0 14 12" fill="none" stroke="#222" stroke-width="1.5"><path d="M0.8 0.5L13.2 11.5M13.2 0.5L0.8 11.5"/></svg>
<div class="t b" style="left:1531px;top:132.2px;letter-spacing:-0.16px;">Selected Tool</div><div class="t" style="left:1660px;top:132.2px;letter-spacing:-0.10px;">Z Fit</div>
<div class="abs hdr" style="left:1531px;top:188px;width:380px;height:19px"></div><svg class="abs" style="left:1553px;top:193px" width="16" height="10" viewBox="0 0 16 10" fill="none" stroke="#111" stroke-width="3"><path d="M1.5 1.5L8 8L14.5 1.5"/></svg><div class="t b" style="left:1591px;top:189.6px;letter-spacing:-0.48px;">Sources</div>
<div class="t b" style="left:1540px;top:242.7px;letter-spacing:-0.28px;">Source Type</div>
<div class="abs" style="left:1540px;top:264px;width:362px;height:20px;background:#fff;border:1px solid #7a7a7a;border-right-color:#696969;border-bottom-color:#e3e3e3;box-shadow:inset 1px 1px 0 #a0a0a0"><div class="t" style="left:3.5px;top:1.5px;color:#7a7a7a;letter-spacing:-0.16px;">Experiment data</div><div class="abs" style="right:-1px;top:1px;width:17px;height:18px;background:#fff;border-right:1px solid #696969;border-bottom:1px solid #696969;box-shadow:inset -1px -1px 0 #a0a0a0"><svg class="abs" style="left:4.5px;top:6.5px" width="7" height="4" viewBox="0 0 7 4"><path d="M0 0H7L3.5 4Z" fill="#8a8a8a"/></svg></div></div>
<div class="abs" style="left:1540px;top:290px;width:362px;height:26px;background:#c3d3e8;border-radius:5px"></div><div class="t b" style="left:1676px;top:295.8px;letter-spacing:-0.25px;">Select Source(s)</div>
<div class="abs" style="left:1540px;top:322px;width:362px;height:192px;background:#fff;border:1px solid #828790"></div><svg class="abs" style="left:1546px;top:330px" width="14" height="8" viewBox="0 0 14 8" fill="none" stroke="#444" stroke-width="1.2"><path d="M2.6 0.7H12A1.3 1.3 0 0 1 13.3 2V6A1.3 1.3 0 0 1 12 7.3H2.6L0.8 5.8V2.2Z"/><path d="M4 3V5M6.2 3V5M8.4 3V5M10.6 3V5" stroke-width="1"/></svg><div class="t" style="left:1568px;top:327px;letter-spacing:-0.56px;">Cycling_EIS_NCR18650PF - A.5</div>
<div class="abs hdr" style="left:1531px;top:556px;width:380px;height:19px"></div><svg class="abs" style="left:1553px;top:561px" width="16" height="10" viewBox="0 0 16 10" fill="none" stroke="#111" stroke-width="3"><path d="M1.5 1.5L8 8L14.5 1.5"/></svg><div class="t b" style="left:1591px;top:557.8px;letter-spacing:-0.14px;">Parameters</div>
<div class="abs" style="left:1893px;top:576px;width:17px;height:17px;background:#fff;border-right:1px solid #696969;border-bottom:1px solid #696969;box-shadow:inset -1px -1px 0 #a0a0a0"><svg class="abs" style="left:4px;top:6px" width="7" height="4" viewBox="0 0 7 4"><path d="M0 4H7L3.5 0Z" fill="#000"/></svg></div><div class="abs" style="left:1893px;top:593px;width:17px;height:155px;background:#fff;border-right:1px solid #696969;border-bottom:1px solid #696969;box-shadow:inset -1px -1px 0 #a0a0a0"></div><div class="abs" style="left:1893px;top:943px;width:17px;height:17px;background:#fff;border-right:1px solid #696969;border-bottom:1px solid #696969;box-shadow:inset -1px -1px 0 #a0a0a0"><svg class="abs" style="left:4px;top:6px" width="7" height="4" viewBox="0 0 7 4"><path d="M0 0H7L3.5 4Z" fill="#000"/></svg></div>
<div class="t b" style="left:1541.5px;top:585.8px;letter-spacing:-0.74px;">Process</div><svg class="abs" style="left:1589px;top:586px" width="16" height="16" viewBox="0 0 16 16"><circle cx="7.75" cy="6.9" r="6.7" fill="none" stroke="#111" stroke-width="1.5"/><circle cx="7.7" cy="4.1" r="1" fill="#111"/><path d="M6.4 6.5H8.2V10M6.3 10.2H9.8" stroke="#111" stroke-width="1.3" fill="none"/></svg>
<div class="abs" style="left:1627px;top:610px;width:13px;height:13px;border-radius:50%;background:#0a5fb8"><i class="abs" style="left:4px;top:4px;width:5px;height:5px;border-radius:50%;background:#fff"></i></div><div class="t" style="left:1646.3px;top:609.8px;letter-spacing:-0.21px;">Fit</div><div class="abs" style="left:1753.5px;top:610px;width:13px;height:13px;border-radius:50%;background:#f3f3f3;border:1px solid #5a5a5a"></div><div class="t" style="left:1773.3px;top:609.8px;letter-spacing:-0.02px;">Plot</div>
<div class="abs" style="left:1541px;top:641px;width:343px;height:127px;border:1px solid #d7d7d7"></div><div class="abs white" style="left:1548px;top:634px;width:55px;height:16px"></div><div class="t b" style="left:1550px;top:634.2px;letter-spacing:-0.37px;">Sampling</div>
<div class="abs" style="left:1551px;top:662.5px;width:13px;height:13px;border:1px solid #5a5a5a;border-radius:3px;background:#fdfdfd"></div><div class="t" style="left:1569px;top:661.9px;letter-spacing:-0.08px;">Select the points frequency range</div>
<div class="t" style="left:1560px;top:698.7px;color:#7a7a7a;letter-spacing:0.04px;">From fi =</div><div class="abs" style="left:1661px;top:696px;width:103px;height:20px;background:#fbfbfb;border:1px solid #e6e6e6;border-radius:2px"></div><div class="t" style="left:1726.5px;top:698.5px;color:#7a7a7a;letter-spacing:-0.61px;">10.000</div><div class="abs" style="left:1770px;top:694px;width:94px;height:23px;background:#fff;border:1px solid #7a7a7a;border-right-color:#696969;border-bottom-color:#e3e3e3;box-shadow:inset 1px 1px 0 #a0a0a0"><div class="t" style="left:3.5px;top:3px;color:#7a7a7a;letter-spacing:-0.22px;">kHz</div><div class="abs" style="right:-1px;top:1px;width:18px;height:21px;background:#fff;border-right:1px solid #696969;border-bottom:1px solid #696969;box-shadow:inset -1px -1px 0 #a0a0a0"><svg class="abs" style="left:5px;top:8px" width="7" height="4" viewBox="0 0 7 4"><path d="M0 0H7L3.5 4Z" fill="#8a8a8a"/></svg></div></div>
<div class="t" style="left:1560px;top:729.8px;color:#7a7a7a;letter-spacing:0.17px;">To ff =</div><div class="abs" style="left:1661px;top:727px;width:103px;height:20px;background:#fbfbfb;border:1px solid #e6e6e6;border-radius:2px"></div><div class="t" style="left:1726.5px;top:729.5px;color:#7a7a7a;letter-spacing:-0.61px;">10.000</div><div class="abs" style="left:1770px;top:725px;width:94px;height:23px;background:#fff;border:1px solid #7a7a7a;border-right-color:#696969;border-bottom-color:#e3e3e3;box-shadow:inset 1px 1px 0 #a0a0a0"><div class="t" style="left:3.5px;top:3px;color:#7a7a7a;letter-spacing:-0.22px;">mHz</div><div class="abs" style="right:-1px;top:1px;width:18px;height:21px;background:#fff;border-right:1px solid #696969;border-bottom:1px solid #696969;box-shadow:inset -1px -1px 0 #a0a0a0"><svg class="abs" style="left:5px;top:8px" width="7" height="4" viewBox="0 0 7 4"><path d="M0 0H7L3.5 4Z" fill="#8a8a8a"/></svg></div></div>
<div class="abs" style="left:1541px;top:783.5px;width:343px;height:176px;border:1px solid #d7d7d7;border-bottom:none"></div><div class="abs white" style="left:1548px;top:776px;width:101px;height:16px"></div><div class="t b" style="left:1550.2px;top:776px;letter-spacing:-0.30px;">Equivalent Circuit</div>
<div class="t" style="left:1550.8px;top:803.8px;letter-spacing:-0.11px;">Select Circuit</div><div class="abs" style="left:1645px;top:801px;width:228px;height:18.5px;background:#fff;border:1px solid #7a7a7a;border-right-color:#696969;border-bottom-color:#e3e3e3;box-shadow:inset 1px 1px 0 #a0a0a0"><div class="t" style="left:3.5px;top:2.55px;letter-spacing:-0.29px;">R1+Q2/R2+Q3/R3+C4/R4</div><div class="abs" style="right:-1px;top:1px;width:17px;height:16.5px;background:#fff;border-right:1px solid #696969;border-bottom:1px solid #696969;box-shadow:inset -1px -1px 0 #a0a0a0"><svg class="abs" style="left:4.5px;top:5.75px" width="7" height="4" viewBox="0 0 7 4"><path d="M0 0H7L3.5 4Z" fill="#000"/></svg></div></div>
<div class="abs" style="left:1789px;top:827px;width:85px;height:24px;background:#0277c1;border-radius:5px"></div><div class="t" style="left:1797.3px;top:831.7px;color:#fff;letter-spacing:0.05px;">More circuits</div>
<div class="t" style="left:1550.8px;top:857.7px;letter-spacing:-0.53px;">Set Values</div>
<div class="t b" style="left:1629px;top:891.6px;letter-spacing:-0.67px;">R1</div><div class="abs" style="left:1650px;top:888px;width:125px;height:21.5px;background:#fff;border:1px solid #e3e3e3;border-bottom:1px solid #6a6a6a;border-radius:2px"></div><div class="t" style="left:1653.8px;top:891.6px;letter-spacing:-0.67px;">1000</div><svg class="abs" style="left:1754px;top:892px" width="13" height="14" viewBox="0 0 13 14"><rect x="0.3" y="6" width="11" height="8" rx="1.6" fill="#4bc488"/><path d="M3.2 6.5V4a3 3 0 0 1 6 0V5" fill="none" stroke="#4bc488" stroke-width="2"/></svg><div class="t b" style="left:1781.3px;top:891.6px;letter-spacing:-0.38px;">(Ω)</div>
<div class="t b" style="left:1629px;top:935px;letter-spacing:-1.00px;">Q2</div><div class="abs" style="left:1650px;top:931px;width:125px;height:21.5px;background:#fff;border:1px solid #e3e3e3;border-bottom:1px solid #6a6a6a;border-radius:2px"></div><div class="t" style="left:1653.8px;top:935px;letter-spacing:-0.34px;">1e-06</div><svg class="abs" style="left:1754px;top:935.4px" width="13" height="14" viewBox="0 0 13 14"><rect x="0.3" y="6" width="11" height="8" rx="1.6" fill="#4bc488"/><path d="M3.2 6.5V4a3 3 0 0 1 6 0V5" fill="none" stroke="#4bc488" stroke-width="2"/></svg><div class="t b" style="left:1781.3px;top:935px;letter-spacing:-0.06px;">(F.s^(α - 1))</div>
<div class="abs white" style="left:1531px;top:960px;width:388px;height:42px"></div>
<div class="abs" style="left:1743px;top:967px;width:56px;height:26px;background:#c3d3e8;border-radius:5px"></div><div class="t" style="left:1753.2px;top:973px;letter-spacing:-0.26px;">Cancel</div><div class="abs" style="left:1805px;top:967px;width:53px;height:26px;background:#c3d3e8;border-radius:5px"></div><div class="t" style="left:1815.2px;top:973px;letter-spacing:-0.28px;">Delete</div><div class="abs" style="left:1864px;top:968px;width:47px;height:24px;background:#a8cce8;border-radius:5px"></div><div class="t" style="left:1872px;top:973px;color:#7f9db8;letter-spacing:0.16px;">Apply</div>
</body></html>
